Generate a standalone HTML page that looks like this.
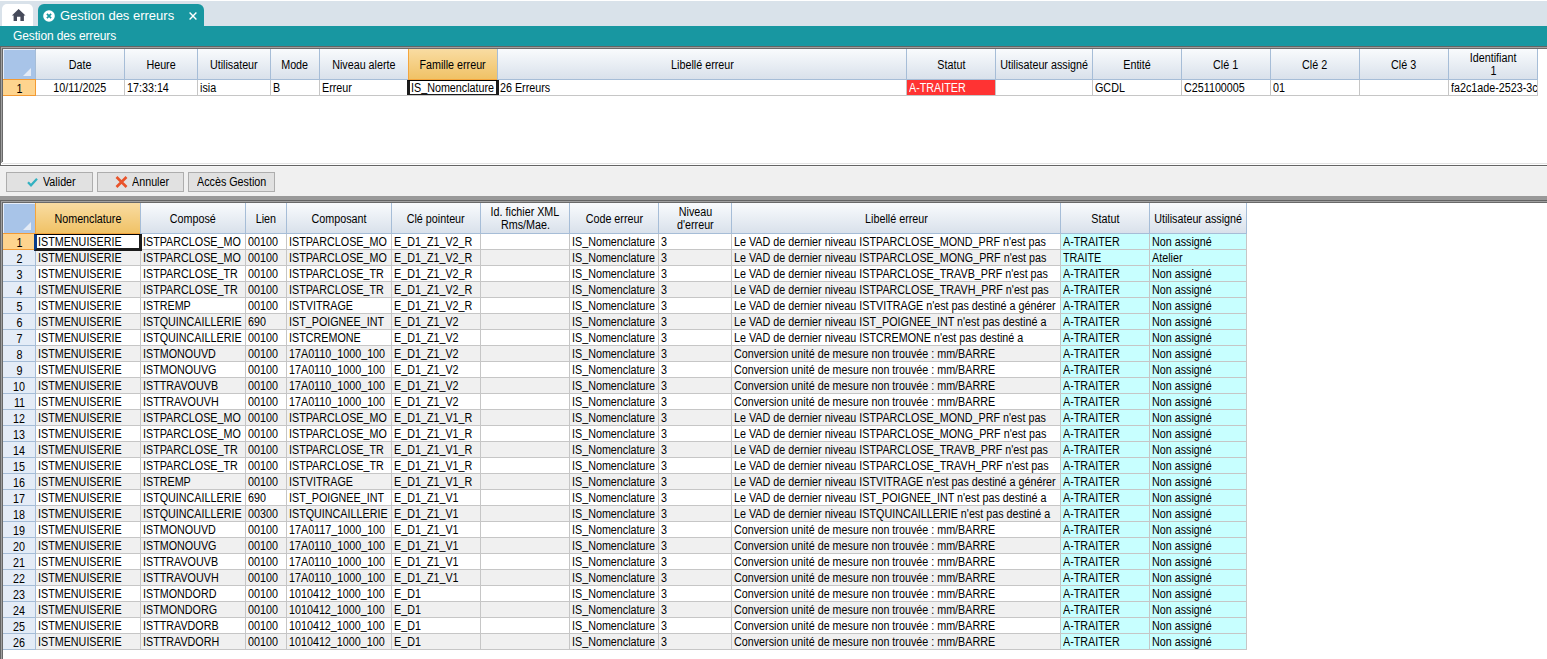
<!DOCTYPE html><html><head><meta charset="utf-8"><style>
html,body{margin:0;padding:0;}
body{width:1547px;height:659px;position:relative;overflow:hidden;background:#f0f0f0;font-family:"Liberation Sans",sans-serif;}
div{position:absolute;box-sizing:border-box;}
.c{overflow:hidden;white-space:nowrap;}
.t{position:absolute;top:0;transform-origin:0 0;white-space:nowrap;}
.cc{display:flex;justify-content:center;}
i{font-style:normal;position:relative;top:-1px;}
.tc{display:block;transform-origin:50% 0;white-space:nowrap;}
</style></head><body>

<div style="left:0px;top:0px;width:1547px;height:26px;background:#d9e2ea;"></div>
<div style="left:0px;top:0px;width:1547px;height:1px;background:#ffffff;"></div>
<div style="left:2px;top:4px;width:31px;height:22px;background:#ffffff;border-radius:5px 5px 0 0;"></div>
<svg style="position:absolute;left:11px;top:8px" width="16" height="14" viewBox="0 0 16 14"><path d="M7.6 1 L0.9 7.4 L2.6 7.4 L2.6 13 L6 13 L6 8.8 L9.4 8.8 L9.4 13 L12.9 13 L12.9 7.4 L14.5 7.4 Z" fill="#464a5a"/></svg>
<div style="left:38px;top:4px;width:166px;height:22px;background:#1897a1;border-radius:6px 6px 0 0;"></div>
<svg style="position:absolute;left:43px;top:10px" width="12" height="12" viewBox="0 0 12 12"><circle cx="6" cy="6" r="5.8" fill="#fff"/><path d="M3.9 3.9 L8.1 8.1 M8.1 3.9 L3.9 8.1" stroke="#1897a1" stroke-width="1.7"/></svg>
<div style="left:60px;top:6px;height:20px;line-height:20px;font-size:13px;color:#fff;white-space:nowrap;">Gestion des erreurs</div>
<svg style="position:absolute;left:189px;top:12px" width="8" height="8" viewBox="0 0 8 8"><path d="M0.6 0.6 L7.4 7.4 M7.4 0.6 L0.6 7.4" stroke="#fff" stroke-width="1.4"/></svg>
<div style="left:0px;top:26px;width:1547px;height:20px;background:#1897a1;"></div>
<div style="left:13px;top:26px;height:20px;line-height:20px;font-size:12px;letter-spacing:-0.12px;color:#fff;white-space:nowrap;">Gestion des erreurs</div>
<div style="left:0px;top:46px;width:1547px;height:120px;background:#ffffff;"></div>
<div style="left:0px;top:46px;width:1547px;height:1px;background:#646464;"></div>
<div style="left:0px;top:46px;width:1px;height:120px;background:#646464;"></div>
<div style="left:1px;top:47px;width:1546px;height:1px;background:#a0a0a0;"></div>
<div style="left:1px;top:47px;width:1px;height:116px;background:#a0a0a0;"></div>
<div style="left:2px;top:48px;width:1545px;height:1px;background:#696969;"></div>
<div style="left:2px;top:48px;width:1px;height:114px;background:#696969;"></div>
<div style="left:2px;top:163px;width:1545px;height:1px;background:#e3e3e3;"></div>
<div style="left:1px;top:164px;width:1546px;height:1px;background:#ffffff;"></div>
<div style="left:0px;top:165px;width:1547px;height:1px;background:#646464;"></div>
<div style="left:0px;top:166px;width:1547px;height:30px;background:#f0f0f0;"></div>
<div style="left:0px;top:166px;width:1547px;height:1px;background:#f6f6f6;"></div>
<div style="left:0px;top:196px;width:1547px;height:4px;background:#999999;"></div>
<div style="left:0px;top:200px;width:1547px;height:459px;background:#ffffff;"></div>
<div style="left:0px;top:200px;width:1547px;height:1px;background:#646464;"></div>
<div style="left:0px;top:200px;width:1px;height:459px;background:#646464;"></div>
<div style="left:1px;top:201px;width:1546px;height:1px;background:#a0a0a0;"></div>
<div style="left:1px;top:201px;width:1px;height:459px;background:#a0a0a0;"></div>
<div style="left:2px;top:202px;width:1545px;height:1px;background:#696969;"></div>
<div style="left:2px;top:202px;width:1px;height:459px;background:#696969;"></div>
<div style="left:3px;top:49px;width:32px;height:30px;background:#a8c4e8;"></div>
<div style="left:3px;top:49px;width:32px;height:1px;background:#e6eefa;"></div>
<div style="left:3px;top:49px;width:1px;height:30px;background:#e6eefa;"></div>
<svg style="position:absolute;left:23px;top:68px" width="9" height="9" viewBox="0 0 9 9"><path d="M8 0 L8 8 L0 8 Z" fill="#e4ebf6"/></svg>
<div style="left:3px;top:79px;width:32px;height:1px;background:#a6bdd7;"></div>
<div style="left:36px;top:49px;width:88px;height:30px;background:linear-gradient(#f9fbfd,#d9e1eb);"></div>
<div class="c cc" style="left:36px;top:57px;width:88px;height:16px;line-height:16px;color:#000;"><span class="tc" style="font-size:12.5px;transform:scaleX(0.86)">Date</span></div>
<div style="left:125px;top:49px;width:72px;height:30px;background:linear-gradient(#f9fbfd,#d9e1eb);"></div>
<div class="c cc" style="left:125px;top:57px;width:72px;height:16px;line-height:16px;color:#000;"><span class="tc" style="font-size:12.5px;transform:scaleX(0.86)">Heure</span></div>
<div style="left:198px;top:49px;width:72px;height:30px;background:linear-gradient(#f9fbfd,#d9e1eb);"></div>
<div class="c cc" style="left:198px;top:57px;width:72px;height:16px;line-height:16px;color:#000;"><span class="tc" style="font-size:12.5px;transform:scaleX(0.86)">Utilisateur</span></div>
<div style="left:271px;top:49px;width:48px;height:30px;background:linear-gradient(#f9fbfd,#d9e1eb);"></div>
<div class="c cc" style="left:271px;top:57px;width:48px;height:16px;line-height:16px;color:#000;"><span class="tc" style="font-size:12.5px;transform:scaleX(0.86)">Mode</span></div>
<div style="left:320px;top:49px;width:88px;height:30px;background:linear-gradient(#f9fbfd,#d9e1eb);"></div>
<div class="c cc" style="left:320px;top:57px;width:88px;height:16px;line-height:16px;color:#000;"><span class="tc" style="font-size:12.5px;transform:scaleX(0.86)">Niveau alerte</span></div>
<div style="left:409px;top:49px;width:88px;height:30px;background:linear-gradient(#f9dca2,#f0c266);"></div>
<div class="c cc" style="left:409px;top:57px;width:88px;height:16px;line-height:16px;color:#000;"><span class="tc" style="font-size:12.5px;transform:scaleX(0.86)">Famille erreur</span></div>
<div style="left:498px;top:49px;width:408px;height:30px;background:linear-gradient(#f9fbfd,#d9e1eb);"></div>
<div class="c cc" style="left:498px;top:57px;width:408px;height:16px;line-height:16px;color:#000;"><span class="tc" style="font-size:12.5px;transform:scaleX(0.86)">Libellé erreur</span></div>
<div style="left:907px;top:49px;width:88px;height:30px;background:linear-gradient(#f9fbfd,#d9e1eb);"></div>
<div class="c cc" style="left:907px;top:57px;width:88px;height:16px;line-height:16px;color:#000;"><span class="tc" style="font-size:12.5px;transform:scaleX(0.86)">Statut</span></div>
<div style="left:996px;top:49px;width:96px;height:30px;background:linear-gradient(#f9fbfd,#d9e1eb);"></div>
<div class="c cc" style="left:996px;top:57px;width:96px;height:16px;line-height:16px;color:#000;"><span class="tc" style="font-size:12.5px;transform:scaleX(0.86)">Utilisateur assigné</span></div>
<div style="left:1093px;top:49px;width:88px;height:30px;background:linear-gradient(#f9fbfd,#d9e1eb);"></div>
<div class="c cc" style="left:1093px;top:57px;width:88px;height:16px;line-height:16px;color:#000;"><span class="tc" style="font-size:12.5px;transform:scaleX(0.86)">Entité</span></div>
<div style="left:1182px;top:49px;width:88px;height:30px;background:linear-gradient(#f9fbfd,#d9e1eb);"></div>
<div class="c cc" style="left:1182px;top:57px;width:88px;height:16px;line-height:16px;color:#000;"><span class="tc" style="font-size:12.5px;transform:scaleX(0.86)">Clé 1</span></div>
<div style="left:1271px;top:49px;width:88px;height:30px;background:linear-gradient(#f9fbfd,#d9e1eb);"></div>
<div class="c cc" style="left:1271px;top:57px;width:88px;height:16px;line-height:16px;color:#000;"><span class="tc" style="font-size:12.5px;transform:scaleX(0.86)">Clé 2</span></div>
<div style="left:1360px;top:49px;width:88px;height:30px;background:linear-gradient(#f9fbfd,#d9e1eb);"></div>
<div class="c cc" style="left:1360px;top:57px;width:88px;height:16px;line-height:16px;color:#000;"><span class="tc" style="font-size:12.5px;transform:scaleX(0.86)">Clé 3</span></div>
<div style="left:1449px;top:49px;width:88px;height:30px;background:linear-gradient(#f9fbfd,#d9e1eb);"></div>
<div class="c cc" style="left:1449px;top:51px;width:88px;height:14px;line-height:14px;color:#000;"><span class="tc" style="font-size:12.5px;transform:scaleX(0.86)">Identifiant</span></div>
<div class="c cc" style="left:1449px;top:64px;width:88px;height:14px;line-height:14px;color:#000;"><span class="tc" style="font-size:12.5px;transform:scaleX(0.86)">1</span></div>
<div style="left:35px;top:49px;width:1px;height:30px;background:#a6bdd7;"></div>
<div style="left:124px;top:49px;width:1px;height:30px;background:#a6bdd7;"></div>
<div style="left:197px;top:49px;width:1px;height:30px;background:#a6bdd7;"></div>
<div style="left:270px;top:49px;width:1px;height:30px;background:#a6bdd7;"></div>
<div style="left:319px;top:49px;width:1px;height:30px;background:#a6bdd7;"></div>
<div style="left:408px;top:49px;width:1px;height:30px;background:#a6bdd7;"></div>
<div style="left:497px;top:49px;width:1px;height:30px;background:#a6bdd7;"></div>
<div style="left:906px;top:49px;width:1px;height:30px;background:#a6bdd7;"></div>
<div style="left:995px;top:49px;width:1px;height:30px;background:#a6bdd7;"></div>
<div style="left:1092px;top:49px;width:1px;height:30px;background:#a6bdd7;"></div>
<div style="left:1181px;top:49px;width:1px;height:30px;background:#a6bdd7;"></div>
<div style="left:1270px;top:49px;width:1px;height:30px;background:#a6bdd7;"></div>
<div style="left:1359px;top:49px;width:1px;height:30px;background:#a6bdd7;"></div>
<div style="left:1448px;top:49px;width:1px;height:30px;background:#a6bdd7;"></div>
<div style="left:1537px;top:49px;width:1px;height:30px;background:#a6bdd7;"></div>
<div style="left:35px;top:79px;width:1503px;height:1px;background:#a6bdd7;"></div>
<div style="left:408px;top:49px;width:1px;height:30px;background:#f4a53c;"></div>
<div style="left:408px;top:79px;width:89px;height:1px;background:#f4a53c;"></div>
<div style="left:3px;top:79px;width:33px;height:17px;background:#fed48e;border:1px solid #f39a33;border-left:0;"></div>
<div class="c cc" style="left:3px;top:81px;width:32px;height:15px;line-height:16px;color:#000;"><span class="tc" style="font-size:12.5px;transform:scaleX(0.86)">1</span></div>
<div style="left:36px;top:80px;width:88px;height:15px;background:#ffffff;"></div>
<div style="left:36px;top:95px;width:89px;height:1px;background:#c6c6c6;"></div>
<div style="left:124px;top:80px;width:1px;height:16px;background:#c6c6c6;"></div>
<div class="c cc" style="left:36px;top:80px;width:88px;height:15px;line-height:16px;color:#000;"><span class="tc" style="font-size:12.5px;transform:scaleX(0.86)">10/11/2025</span></div>
<div style="left:125px;top:80px;width:72px;height:15px;background:#ffffff;"></div>
<div style="left:125px;top:95px;width:73px;height:1px;background:#c6c6c6;"></div>
<div style="left:197px;top:80px;width:1px;height:16px;background:#c6c6c6;"></div>
<div class="c" style="left:125px;top:80px;width:72px;height:15px;line-height:16px;color:#000;"><span class="t" style="left:2px;font-size:12.5px;transform:scaleX(0.86)">17:33:14</span></div>
<div style="left:198px;top:80px;width:72px;height:15px;background:#ffffff;"></div>
<div style="left:198px;top:95px;width:73px;height:1px;background:#c6c6c6;"></div>
<div style="left:270px;top:80px;width:1px;height:16px;background:#c6c6c6;"></div>
<div class="c" style="left:198px;top:80px;width:72px;height:15px;line-height:16px;color:#000;"><span class="t" style="left:2px;font-size:12.5px;transform:scaleX(0.86)">isia</span></div>
<div style="left:271px;top:80px;width:48px;height:15px;background:#ffffff;"></div>
<div style="left:271px;top:95px;width:49px;height:1px;background:#c6c6c6;"></div>
<div style="left:319px;top:80px;width:1px;height:16px;background:#c6c6c6;"></div>
<div class="c" style="left:271px;top:80px;width:48px;height:15px;line-height:16px;color:#000;"><span class="t" style="left:2px;font-size:12.5px;transform:scaleX(0.86)">B</span></div>
<div style="left:320px;top:80px;width:88px;height:15px;background:#ffffff;"></div>
<div style="left:320px;top:95px;width:89px;height:1px;background:#c6c6c6;"></div>
<div style="left:408px;top:80px;width:1px;height:16px;background:#c6c6c6;"></div>
<div class="c" style="left:320px;top:80px;width:88px;height:15px;line-height:16px;color:#000;"><span class="t" style="left:2px;font-size:12.5px;transform:scaleX(0.86)">Erreur</span></div>
<div style="left:409px;top:80px;width:88px;height:15px;background:#ffffff;"></div>
<div style="left:409px;top:95px;width:89px;height:1px;background:#c6c6c6;"></div>
<div style="left:497px;top:80px;width:1px;height:16px;background:#c6c6c6;"></div>
<div class="c" style="left:409px;top:80px;width:88px;height:15px;line-height:16px;color:#000;"><span class="t" style="left:2px;font-size:12.5px;transform:scaleX(0.86)">IS<i>_</i>Nomenclature</span></div>
<div style="left:498px;top:80px;width:408px;height:15px;background:#ffffff;"></div>
<div style="left:498px;top:95px;width:409px;height:1px;background:#c6c6c6;"></div>
<div style="left:906px;top:80px;width:1px;height:16px;background:#c6c6c6;"></div>
<div class="c" style="left:498px;top:80px;width:408px;height:15px;line-height:16px;color:#000;"><span class="t" style="left:2px;font-size:12.5px;transform:scaleX(0.86)">26 Erreurs</span></div>
<div style="left:907px;top:80px;width:88px;height:15px;background:#ff3333;"></div>
<div style="left:907px;top:95px;width:89px;height:1px;background:#c6c6c6;"></div>
<div style="left:995px;top:80px;width:1px;height:16px;background:#c6c6c6;"></div>
<div class="c" style="left:907px;top:80px;width:88px;height:15px;line-height:16px;color:#fff;"><span class="t" style="left:2px;font-size:12.5px;transform:scaleX(0.86)">A-TRAITER</span></div>
<div style="left:996px;top:80px;width:96px;height:15px;background:#ffffff;"></div>
<div style="left:996px;top:95px;width:97px;height:1px;background:#c6c6c6;"></div>
<div style="left:1092px;top:80px;width:1px;height:16px;background:#c6c6c6;"></div>
<div style="left:1093px;top:80px;width:88px;height:15px;background:#ffffff;"></div>
<div style="left:1093px;top:95px;width:89px;height:1px;background:#c6c6c6;"></div>
<div style="left:1181px;top:80px;width:1px;height:16px;background:#c6c6c6;"></div>
<div class="c" style="left:1093px;top:80px;width:88px;height:15px;line-height:16px;color:#000;"><span class="t" style="left:2px;font-size:12.5px;transform:scaleX(0.86)">GCDL</span></div>
<div style="left:1182px;top:80px;width:88px;height:15px;background:#ffffff;"></div>
<div style="left:1182px;top:95px;width:89px;height:1px;background:#c6c6c6;"></div>
<div style="left:1270px;top:80px;width:1px;height:16px;background:#c6c6c6;"></div>
<div class="c" style="left:1182px;top:80px;width:88px;height:15px;line-height:16px;color:#000;"><span class="t" style="left:2px;font-size:12.5px;transform:scaleX(0.86)">C251100005</span></div>
<div style="left:1271px;top:80px;width:88px;height:15px;background:#ffffff;"></div>
<div style="left:1271px;top:95px;width:89px;height:1px;background:#c6c6c6;"></div>
<div style="left:1359px;top:80px;width:1px;height:16px;background:#c6c6c6;"></div>
<div class="c" style="left:1271px;top:80px;width:88px;height:15px;line-height:16px;color:#000;"><span class="t" style="left:2px;font-size:12.5px;transform:scaleX(0.86)">01</span></div>
<div style="left:1360px;top:80px;width:88px;height:15px;background:#ffffff;"></div>
<div style="left:1360px;top:95px;width:89px;height:1px;background:#c6c6c6;"></div>
<div style="left:1448px;top:80px;width:1px;height:16px;background:#c6c6c6;"></div>
<div style="left:1449px;top:80px;width:88px;height:15px;background:#ffffff;"></div>
<div style="left:1449px;top:95px;width:89px;height:1px;background:#c6c6c6;"></div>
<div style="left:1537px;top:80px;width:1px;height:16px;background:#c6c6c6;"></div>
<div class="c" style="left:1449px;top:80px;width:88px;height:15px;line-height:16px;color:#000;"><span class="t" style="left:2px;font-size:12.5px;transform:scaleX(0.86)">fa2c1ade-2523-3c0e</span></div>
<div style="left:407px;top:80px;width:92px;height:15px;border-top:1px solid #000;border-left:3px solid #1c1c1c;border-right:3px solid #1c1c1c;border-bottom:1px solid #1c1c1c;"></div>
<div style="left:6px;top:172px;width:87px;height:20px;background:#e1e1e1;border:1px solid #adadad;"></div>
<svg style="position:absolute;left:27px;top:177px" width="11" height="10" viewBox="0 0 11 10"><path d="M1 5.2 L4 8.3 L10 1.7" fill="none" stroke="#33b1c1" stroke-width="2.2"/></svg>
<div class="c" style="left:43px;top:172px;width:120px;height:20px;line-height:20px;"><span class="t" style="font-size:12.5px;transform:scaleX(0.86)">Valider</span></div>
<div style="left:97px;top:172px;width:87px;height:20px;background:#e1e1e1;border:1px solid #adadad;"></div>
<svg style="position:absolute;left:115px;top:176px" width="13" height="12" viewBox="0 0 13 12"><path d="M1.5 1 L11.5 11 M11.5 1 L1.5 11" fill="none" stroke="#e9532a" stroke-width="2.6"/></svg>
<div class="c" style="left:132px;top:172px;width:120px;height:20px;line-height:20px;"><span class="t" style="font-size:12.5px;transform:scaleX(0.86)">Annuler</span></div>
<div style="left:188px;top:172px;width:87px;height:20px;background:#e1e1e1;border:1px solid #adadad;"></div>
<div class="c" style="left:197px;top:172px;width:120px;height:20px;line-height:20px;"><span class="t" style="font-size:12.5px;transform:scaleX(0.86)">Accès Gestion</span></div>
<div style="left:3px;top:203px;width:32px;height:30px;background:#a8c4e8;"></div>
<div style="left:3px;top:203px;width:32px;height:1px;background:#e6eefa;"></div>
<div style="left:3px;top:203px;width:1px;height:30px;background:#e6eefa;"></div>
<svg style="position:absolute;left:23px;top:222px" width="9" height="9" viewBox="0 0 9 9"><path d="M8 0 L8 8 L0 8 Z" fill="#e4ebf6"/></svg>
<div style="left:3px;top:233px;width:32px;height:1px;background:#a6bdd7;"></div>
<div style="left:36px;top:203px;width:104px;height:30px;background:linear-gradient(#f9dca2,#f0c266);"></div>
<div class="c cc" style="left:36px;top:211px;width:104px;height:16px;line-height:16px;color:#000;"><span class="tc" style="font-size:12.5px;transform:scaleX(0.86)">Nomenclature</span></div>
<div style="left:141px;top:203px;width:104px;height:30px;background:linear-gradient(#f9fbfd,#d9e1eb);"></div>
<div class="c cc" style="left:141px;top:211px;width:104px;height:16px;line-height:16px;color:#000;"><span class="tc" style="font-size:12.5px;transform:scaleX(0.86)">Composé</span></div>
<div style="left:246px;top:203px;width:40px;height:30px;background:linear-gradient(#f9fbfd,#d9e1eb);"></div>
<div class="c cc" style="left:246px;top:211px;width:40px;height:16px;line-height:16px;color:#000;"><span class="tc" style="font-size:12.5px;transform:scaleX(0.86)">Lien</span></div>
<div style="left:287px;top:203px;width:104px;height:30px;background:linear-gradient(#f9fbfd,#d9e1eb);"></div>
<div class="c cc" style="left:287px;top:211px;width:104px;height:16px;line-height:16px;color:#000;"><span class="tc" style="font-size:12.5px;transform:scaleX(0.86)">Composant</span></div>
<div style="left:392px;top:203px;width:88px;height:30px;background:linear-gradient(#f9fbfd,#d9e1eb);"></div>
<div class="c cc" style="left:392px;top:211px;width:88px;height:16px;line-height:16px;color:#000;"><span class="tc" style="font-size:12.5px;transform:scaleX(0.86)">Clé pointeur</span></div>
<div style="left:481px;top:203px;width:88px;height:30px;background:linear-gradient(#f9fbfd,#d9e1eb);"></div>
<div class="c cc" style="left:481px;top:205px;width:88px;height:14px;line-height:14px;color:#000;"><span class="tc" style="font-size:12.5px;transform:scaleX(0.86)">Id. fichier XML</span></div>
<div class="c cc" style="left:481px;top:218px;width:88px;height:14px;line-height:14px;color:#000;"><span class="tc" style="font-size:12.5px;transform:scaleX(0.86)">Rms/Mae.</span></div>
<div style="left:570px;top:203px;width:88px;height:30px;background:linear-gradient(#f9fbfd,#d9e1eb);"></div>
<div class="c cc" style="left:570px;top:211px;width:88px;height:16px;line-height:16px;color:#000;"><span class="tc" style="font-size:12.5px;transform:scaleX(0.86)">Code erreur</span></div>
<div style="left:659px;top:203px;width:72px;height:30px;background:linear-gradient(#f9fbfd,#d9e1eb);"></div>
<div class="c cc" style="left:659px;top:205px;width:72px;height:14px;line-height:14px;color:#000;"><span class="tc" style="font-size:12.5px;transform:scaleX(0.86)">Niveau</span></div>
<div class="c cc" style="left:659px;top:218px;width:72px;height:14px;line-height:14px;color:#000;"><span class="tc" style="font-size:12.5px;transform:scaleX(0.86)">d&#x27;erreur</span></div>
<div style="left:732px;top:203px;width:328px;height:30px;background:linear-gradient(#f9fbfd,#d9e1eb);"></div>
<div class="c cc" style="left:732px;top:211px;width:328px;height:16px;line-height:16px;color:#000;"><span class="tc" style="font-size:12.5px;transform:scaleX(0.86)">Libellé erreur</span></div>
<div style="left:1061px;top:203px;width:88px;height:30px;background:linear-gradient(#f9fbfd,#d9e1eb);"></div>
<div class="c cc" style="left:1061px;top:211px;width:88px;height:16px;line-height:16px;color:#000;"><span class="tc" style="font-size:12.5px;transform:scaleX(0.86)">Statut</span></div>
<div style="left:1150px;top:203px;width:96px;height:30px;background:linear-gradient(#f9fbfd,#d9e1eb);"></div>
<div class="c cc" style="left:1150px;top:211px;width:96px;height:16px;line-height:16px;color:#000;"><span class="tc" style="font-size:12.5px;transform:scaleX(0.86)">Utilisateur assigné</span></div>
<div style="left:35px;top:203px;width:1px;height:30px;background:#a6bdd7;"></div>
<div style="left:140px;top:203px;width:1px;height:30px;background:#a6bdd7;"></div>
<div style="left:245px;top:203px;width:1px;height:30px;background:#a6bdd7;"></div>
<div style="left:286px;top:203px;width:1px;height:30px;background:#a6bdd7;"></div>
<div style="left:391px;top:203px;width:1px;height:30px;background:#a6bdd7;"></div>
<div style="left:480px;top:203px;width:1px;height:30px;background:#a6bdd7;"></div>
<div style="left:569px;top:203px;width:1px;height:30px;background:#a6bdd7;"></div>
<div style="left:658px;top:203px;width:1px;height:30px;background:#a6bdd7;"></div>
<div style="left:731px;top:203px;width:1px;height:30px;background:#a6bdd7;"></div>
<div style="left:1060px;top:203px;width:1px;height:30px;background:#a6bdd7;"></div>
<div style="left:1149px;top:203px;width:1px;height:30px;background:#a6bdd7;"></div>
<div style="left:1246px;top:203px;width:1px;height:30px;background:#a6bdd7;"></div>
<div style="left:35px;top:233px;width:1212px;height:1px;background:#a6bdd7;"></div>
<div style="left:35px;top:203px;width:1px;height:30px;background:#f4a53c;"></div>
<div style="left:35px;top:233px;width:105px;height:1px;background:#f4a53c;"></div>
<div style="left:3px;top:233px;width:33px;height:17px;background:#fed48e;border:1px solid #f39a33;border-left:0;"></div>
<div class="c cc" style="left:3px;top:235px;width:32px;height:15px;line-height:16px;color:#000;"><span class="tc" style="font-size:12.5px;transform:scaleX(0.86)">1</span></div>
<div style="left:36px;top:234px;width:104px;height:15px;background:#ffffff;"></div>
<div style="left:36px;top:249px;width:105px;height:1px;background:#c6c6c6;"></div>
<div style="left:140px;top:234px;width:1px;height:16px;background:#c6c6c6;"></div>
<div class="c" style="left:36px;top:234px;width:104px;height:15px;line-height:16px;color:#000;"><span class="t" style="left:2px;font-size:12.5px;transform:scaleX(0.86)">ISTMENUISERIE</span></div>
<div style="left:141px;top:234px;width:104px;height:15px;background:#ffffff;"></div>
<div style="left:141px;top:249px;width:105px;height:1px;background:#c6c6c6;"></div>
<div style="left:245px;top:234px;width:1px;height:16px;background:#c6c6c6;"></div>
<div class="c" style="left:141px;top:234px;width:104px;height:15px;line-height:16px;color:#000;"><span class="t" style="left:2px;font-size:12.5px;transform:scaleX(0.86)">ISTPARCLOSE<i>_</i>MO</span></div>
<div style="left:246px;top:234px;width:40px;height:15px;background:#ffffff;"></div>
<div style="left:246px;top:249px;width:41px;height:1px;background:#c6c6c6;"></div>
<div style="left:286px;top:234px;width:1px;height:16px;background:#c6c6c6;"></div>
<div class="c" style="left:246px;top:234px;width:40px;height:15px;line-height:16px;color:#000;"><span class="t" style="left:2px;font-size:12.5px;transform:scaleX(0.86)">00100</span></div>
<div style="left:287px;top:234px;width:104px;height:15px;background:#ffffff;"></div>
<div style="left:287px;top:249px;width:105px;height:1px;background:#c6c6c6;"></div>
<div style="left:391px;top:234px;width:1px;height:16px;background:#c6c6c6;"></div>
<div class="c" style="left:287px;top:234px;width:104px;height:15px;line-height:16px;color:#000;"><span class="t" style="left:2px;font-size:12.5px;transform:scaleX(0.86)">ISTPARCLOSE<i>_</i>MO</span></div>
<div style="left:392px;top:234px;width:88px;height:15px;background:#ffffff;"></div>
<div style="left:392px;top:249px;width:89px;height:1px;background:#c6c6c6;"></div>
<div style="left:480px;top:234px;width:1px;height:16px;background:#c6c6c6;"></div>
<div class="c" style="left:392px;top:234px;width:88px;height:15px;line-height:16px;color:#000;"><span class="t" style="left:2px;font-size:12.5px;transform:scaleX(0.86)">E<i>_</i>D1<i>_</i>Z1<i>_</i>V2<i>_</i>R</span></div>
<div style="left:481px;top:234px;width:88px;height:15px;background:#ffffff;"></div>
<div style="left:481px;top:249px;width:89px;height:1px;background:#c6c6c6;"></div>
<div style="left:569px;top:234px;width:1px;height:16px;background:#c6c6c6;"></div>
<div style="left:570px;top:234px;width:88px;height:15px;background:#ffffff;"></div>
<div style="left:570px;top:249px;width:89px;height:1px;background:#c6c6c6;"></div>
<div style="left:658px;top:234px;width:1px;height:16px;background:#c6c6c6;"></div>
<div class="c" style="left:570px;top:234px;width:88px;height:15px;line-height:16px;color:#000;"><span class="t" style="left:2px;font-size:12.5px;transform:scaleX(0.86)">IS<i>_</i>Nomenclature</span></div>
<div style="left:659px;top:234px;width:72px;height:15px;background:#ffffff;"></div>
<div style="left:659px;top:249px;width:73px;height:1px;background:#c6c6c6;"></div>
<div style="left:731px;top:234px;width:1px;height:16px;background:#c6c6c6;"></div>
<div class="c" style="left:659px;top:234px;width:72px;height:15px;line-height:16px;color:#000;"><span class="t" style="left:2px;font-size:12.5px;transform:scaleX(0.86)">3</span></div>
<div style="left:732px;top:234px;width:328px;height:15px;background:#ffffff;"></div>
<div style="left:732px;top:249px;width:329px;height:1px;background:#c6c6c6;"></div>
<div style="left:1060px;top:234px;width:1px;height:16px;background:#c6c6c6;"></div>
<div class="c" style="left:732px;top:234px;width:328px;height:15px;line-height:16px;color:#000;"><span class="t" style="left:2px;font-size:12.5px;transform:scaleX(0.86)">Le VAD de dernier niveau ISTPARCLOSE<i>_</i>MOND<i>_</i>PRF n&#x27;est pas</span></div>
<div style="left:1061px;top:234px;width:88px;height:15px;background:#c8ffff;"></div>
<div style="left:1061px;top:249px;width:89px;height:1px;background:#c6c6c6;"></div>
<div style="left:1149px;top:234px;width:1px;height:16px;background:#c6c6c6;"></div>
<div class="c" style="left:1061px;top:234px;width:88px;height:15px;line-height:16px;color:#000;"><span class="t" style="left:2px;font-size:12.5px;transform:scaleX(0.86)">A-TRAITER</span></div>
<div style="left:1150px;top:234px;width:96px;height:15px;background:#c8ffff;"></div>
<div style="left:1150px;top:249px;width:97px;height:1px;background:#c6c6c6;"></div>
<div style="left:1246px;top:234px;width:1px;height:16px;background:#c6c6c6;"></div>
<div class="c" style="left:1150px;top:234px;width:96px;height:15px;line-height:16px;color:#000;"><span class="t" style="left:2px;font-size:12.5px;transform:scaleX(0.86)">Non assigné</span></div>
<div style="left:3px;top:250px;width:32px;height:15px;background:#e4ecf7;"></div>
<div style="left:3px;top:265px;width:32px;height:1px;background:#a6bdd7;"></div>
<div style="left:35px;top:250px;width:1px;height:16px;background:#a6bdd7;"></div>
<div class="c cc" style="left:3px;top:251px;width:32px;height:15px;line-height:16px;color:#000;"><span class="tc" style="font-size:12.5px;transform:scaleX(0.86)">2</span></div>
<div style="left:36px;top:250px;width:104px;height:15px;background:#f0f0f0;"></div>
<div style="left:36px;top:265px;width:105px;height:1px;background:#c6c6c6;"></div>
<div style="left:140px;top:250px;width:1px;height:16px;background:#c6c6c6;"></div>
<div class="c" style="left:36px;top:250px;width:104px;height:15px;line-height:16px;color:#000;"><span class="t" style="left:2px;font-size:12.5px;transform:scaleX(0.86)">ISTMENUISERIE</span></div>
<div style="left:141px;top:250px;width:104px;height:15px;background:#f0f0f0;"></div>
<div style="left:141px;top:265px;width:105px;height:1px;background:#c6c6c6;"></div>
<div style="left:245px;top:250px;width:1px;height:16px;background:#c6c6c6;"></div>
<div class="c" style="left:141px;top:250px;width:104px;height:15px;line-height:16px;color:#000;"><span class="t" style="left:2px;font-size:12.5px;transform:scaleX(0.86)">ISTPARCLOSE<i>_</i>MO</span></div>
<div style="left:246px;top:250px;width:40px;height:15px;background:#f0f0f0;"></div>
<div style="left:246px;top:265px;width:41px;height:1px;background:#c6c6c6;"></div>
<div style="left:286px;top:250px;width:1px;height:16px;background:#c6c6c6;"></div>
<div class="c" style="left:246px;top:250px;width:40px;height:15px;line-height:16px;color:#000;"><span class="t" style="left:2px;font-size:12.5px;transform:scaleX(0.86)">00100</span></div>
<div style="left:287px;top:250px;width:104px;height:15px;background:#f0f0f0;"></div>
<div style="left:287px;top:265px;width:105px;height:1px;background:#c6c6c6;"></div>
<div style="left:391px;top:250px;width:1px;height:16px;background:#c6c6c6;"></div>
<div class="c" style="left:287px;top:250px;width:104px;height:15px;line-height:16px;color:#000;"><span class="t" style="left:2px;font-size:12.5px;transform:scaleX(0.86)">ISTPARCLOSE<i>_</i>MO</span></div>
<div style="left:392px;top:250px;width:88px;height:15px;background:#f0f0f0;"></div>
<div style="left:392px;top:265px;width:89px;height:1px;background:#c6c6c6;"></div>
<div style="left:480px;top:250px;width:1px;height:16px;background:#c6c6c6;"></div>
<div class="c" style="left:392px;top:250px;width:88px;height:15px;line-height:16px;color:#000;"><span class="t" style="left:2px;font-size:12.5px;transform:scaleX(0.86)">E<i>_</i>D1<i>_</i>Z1<i>_</i>V2<i>_</i>R</span></div>
<div style="left:481px;top:250px;width:88px;height:15px;background:#f0f0f0;"></div>
<div style="left:481px;top:265px;width:89px;height:1px;background:#c6c6c6;"></div>
<div style="left:569px;top:250px;width:1px;height:16px;background:#c6c6c6;"></div>
<div style="left:570px;top:250px;width:88px;height:15px;background:#f0f0f0;"></div>
<div style="left:570px;top:265px;width:89px;height:1px;background:#c6c6c6;"></div>
<div style="left:658px;top:250px;width:1px;height:16px;background:#c6c6c6;"></div>
<div class="c" style="left:570px;top:250px;width:88px;height:15px;line-height:16px;color:#000;"><span class="t" style="left:2px;font-size:12.5px;transform:scaleX(0.86)">IS<i>_</i>Nomenclature</span></div>
<div style="left:659px;top:250px;width:72px;height:15px;background:#f0f0f0;"></div>
<div style="left:659px;top:265px;width:73px;height:1px;background:#c6c6c6;"></div>
<div style="left:731px;top:250px;width:1px;height:16px;background:#c6c6c6;"></div>
<div class="c" style="left:659px;top:250px;width:72px;height:15px;line-height:16px;color:#000;"><span class="t" style="left:2px;font-size:12.5px;transform:scaleX(0.86)">3</span></div>
<div style="left:732px;top:250px;width:328px;height:15px;background:#f0f0f0;"></div>
<div style="left:732px;top:265px;width:329px;height:1px;background:#c6c6c6;"></div>
<div style="left:1060px;top:250px;width:1px;height:16px;background:#c6c6c6;"></div>
<div class="c" style="left:732px;top:250px;width:328px;height:15px;line-height:16px;color:#000;"><span class="t" style="left:2px;font-size:12.5px;transform:scaleX(0.86)">Le VAD de dernier niveau ISTPARCLOSE<i>_</i>MONG<i>_</i>PRF n&#x27;est pas</span></div>
<div style="left:1061px;top:250px;width:88px;height:15px;background:#c8ffff;"></div>
<div style="left:1061px;top:265px;width:89px;height:1px;background:#c6c6c6;"></div>
<div style="left:1149px;top:250px;width:1px;height:16px;background:#c6c6c6;"></div>
<div class="c" style="left:1061px;top:250px;width:88px;height:15px;line-height:16px;color:#000;"><span class="t" style="left:2px;font-size:12.5px;transform:scaleX(0.86)">TRAITE</span></div>
<div style="left:1150px;top:250px;width:96px;height:15px;background:#c8ffff;"></div>
<div style="left:1150px;top:265px;width:97px;height:1px;background:#c6c6c6;"></div>
<div style="left:1246px;top:250px;width:1px;height:16px;background:#c6c6c6;"></div>
<div class="c" style="left:1150px;top:250px;width:96px;height:15px;line-height:16px;color:#000;"><span class="t" style="left:2px;font-size:12.5px;transform:scaleX(0.86)">Atelier</span></div>
<div style="left:3px;top:266px;width:32px;height:15px;background:#e4ecf7;"></div>
<div style="left:3px;top:281px;width:32px;height:1px;background:#a6bdd7;"></div>
<div style="left:35px;top:266px;width:1px;height:16px;background:#a6bdd7;"></div>
<div class="c cc" style="left:3px;top:267px;width:32px;height:15px;line-height:16px;color:#000;"><span class="tc" style="font-size:12.5px;transform:scaleX(0.86)">3</span></div>
<div style="left:36px;top:266px;width:104px;height:15px;background:#ffffff;"></div>
<div style="left:36px;top:281px;width:105px;height:1px;background:#c6c6c6;"></div>
<div style="left:140px;top:266px;width:1px;height:16px;background:#c6c6c6;"></div>
<div class="c" style="left:36px;top:266px;width:104px;height:15px;line-height:16px;color:#000;"><span class="t" style="left:2px;font-size:12.5px;transform:scaleX(0.86)">ISTMENUISERIE</span></div>
<div style="left:141px;top:266px;width:104px;height:15px;background:#ffffff;"></div>
<div style="left:141px;top:281px;width:105px;height:1px;background:#c6c6c6;"></div>
<div style="left:245px;top:266px;width:1px;height:16px;background:#c6c6c6;"></div>
<div class="c" style="left:141px;top:266px;width:104px;height:15px;line-height:16px;color:#000;"><span class="t" style="left:2px;font-size:12.5px;transform:scaleX(0.86)">ISTPARCLOSE<i>_</i>TR</span></div>
<div style="left:246px;top:266px;width:40px;height:15px;background:#ffffff;"></div>
<div style="left:246px;top:281px;width:41px;height:1px;background:#c6c6c6;"></div>
<div style="left:286px;top:266px;width:1px;height:16px;background:#c6c6c6;"></div>
<div class="c" style="left:246px;top:266px;width:40px;height:15px;line-height:16px;color:#000;"><span class="t" style="left:2px;font-size:12.5px;transform:scaleX(0.86)">00100</span></div>
<div style="left:287px;top:266px;width:104px;height:15px;background:#ffffff;"></div>
<div style="left:287px;top:281px;width:105px;height:1px;background:#c6c6c6;"></div>
<div style="left:391px;top:266px;width:1px;height:16px;background:#c6c6c6;"></div>
<div class="c" style="left:287px;top:266px;width:104px;height:15px;line-height:16px;color:#000;"><span class="t" style="left:2px;font-size:12.5px;transform:scaleX(0.86)">ISTPARCLOSE<i>_</i>TR</span></div>
<div style="left:392px;top:266px;width:88px;height:15px;background:#ffffff;"></div>
<div style="left:392px;top:281px;width:89px;height:1px;background:#c6c6c6;"></div>
<div style="left:480px;top:266px;width:1px;height:16px;background:#c6c6c6;"></div>
<div class="c" style="left:392px;top:266px;width:88px;height:15px;line-height:16px;color:#000;"><span class="t" style="left:2px;font-size:12.5px;transform:scaleX(0.86)">E<i>_</i>D1<i>_</i>Z1<i>_</i>V2<i>_</i>R</span></div>
<div style="left:481px;top:266px;width:88px;height:15px;background:#ffffff;"></div>
<div style="left:481px;top:281px;width:89px;height:1px;background:#c6c6c6;"></div>
<div style="left:569px;top:266px;width:1px;height:16px;background:#c6c6c6;"></div>
<div style="left:570px;top:266px;width:88px;height:15px;background:#ffffff;"></div>
<div style="left:570px;top:281px;width:89px;height:1px;background:#c6c6c6;"></div>
<div style="left:658px;top:266px;width:1px;height:16px;background:#c6c6c6;"></div>
<div class="c" style="left:570px;top:266px;width:88px;height:15px;line-height:16px;color:#000;"><span class="t" style="left:2px;font-size:12.5px;transform:scaleX(0.86)">IS<i>_</i>Nomenclature</span></div>
<div style="left:659px;top:266px;width:72px;height:15px;background:#ffffff;"></div>
<div style="left:659px;top:281px;width:73px;height:1px;background:#c6c6c6;"></div>
<div style="left:731px;top:266px;width:1px;height:16px;background:#c6c6c6;"></div>
<div class="c" style="left:659px;top:266px;width:72px;height:15px;line-height:16px;color:#000;"><span class="t" style="left:2px;font-size:12.5px;transform:scaleX(0.86)">3</span></div>
<div style="left:732px;top:266px;width:328px;height:15px;background:#ffffff;"></div>
<div style="left:732px;top:281px;width:329px;height:1px;background:#c6c6c6;"></div>
<div style="left:1060px;top:266px;width:1px;height:16px;background:#c6c6c6;"></div>
<div class="c" style="left:732px;top:266px;width:328px;height:15px;line-height:16px;color:#000;"><span class="t" style="left:2px;font-size:12.5px;transform:scaleX(0.86)">Le VAD de dernier niveau ISTPARCLOSE<i>_</i>TRAVB<i>_</i>PRF n&#x27;est pas</span></div>
<div style="left:1061px;top:266px;width:88px;height:15px;background:#c8ffff;"></div>
<div style="left:1061px;top:281px;width:89px;height:1px;background:#c6c6c6;"></div>
<div style="left:1149px;top:266px;width:1px;height:16px;background:#c6c6c6;"></div>
<div class="c" style="left:1061px;top:266px;width:88px;height:15px;line-height:16px;color:#000;"><span class="t" style="left:2px;font-size:12.5px;transform:scaleX(0.86)">A-TRAITER</span></div>
<div style="left:1150px;top:266px;width:96px;height:15px;background:#c8ffff;"></div>
<div style="left:1150px;top:281px;width:97px;height:1px;background:#c6c6c6;"></div>
<div style="left:1246px;top:266px;width:1px;height:16px;background:#c6c6c6;"></div>
<div class="c" style="left:1150px;top:266px;width:96px;height:15px;line-height:16px;color:#000;"><span class="t" style="left:2px;font-size:12.5px;transform:scaleX(0.86)">Non assigné</span></div>
<div style="left:3px;top:282px;width:32px;height:15px;background:#e4ecf7;"></div>
<div style="left:3px;top:297px;width:32px;height:1px;background:#a6bdd7;"></div>
<div style="left:35px;top:282px;width:1px;height:16px;background:#a6bdd7;"></div>
<div class="c cc" style="left:3px;top:283px;width:32px;height:15px;line-height:16px;color:#000;"><span class="tc" style="font-size:12.5px;transform:scaleX(0.86)">4</span></div>
<div style="left:36px;top:282px;width:104px;height:15px;background:#f0f0f0;"></div>
<div style="left:36px;top:297px;width:105px;height:1px;background:#c6c6c6;"></div>
<div style="left:140px;top:282px;width:1px;height:16px;background:#c6c6c6;"></div>
<div class="c" style="left:36px;top:282px;width:104px;height:15px;line-height:16px;color:#000;"><span class="t" style="left:2px;font-size:12.5px;transform:scaleX(0.86)">ISTMENUISERIE</span></div>
<div style="left:141px;top:282px;width:104px;height:15px;background:#f0f0f0;"></div>
<div style="left:141px;top:297px;width:105px;height:1px;background:#c6c6c6;"></div>
<div style="left:245px;top:282px;width:1px;height:16px;background:#c6c6c6;"></div>
<div class="c" style="left:141px;top:282px;width:104px;height:15px;line-height:16px;color:#000;"><span class="t" style="left:2px;font-size:12.5px;transform:scaleX(0.86)">ISTPARCLOSE<i>_</i>TR</span></div>
<div style="left:246px;top:282px;width:40px;height:15px;background:#f0f0f0;"></div>
<div style="left:246px;top:297px;width:41px;height:1px;background:#c6c6c6;"></div>
<div style="left:286px;top:282px;width:1px;height:16px;background:#c6c6c6;"></div>
<div class="c" style="left:246px;top:282px;width:40px;height:15px;line-height:16px;color:#000;"><span class="t" style="left:2px;font-size:12.5px;transform:scaleX(0.86)">00100</span></div>
<div style="left:287px;top:282px;width:104px;height:15px;background:#f0f0f0;"></div>
<div style="left:287px;top:297px;width:105px;height:1px;background:#c6c6c6;"></div>
<div style="left:391px;top:282px;width:1px;height:16px;background:#c6c6c6;"></div>
<div class="c" style="left:287px;top:282px;width:104px;height:15px;line-height:16px;color:#000;"><span class="t" style="left:2px;font-size:12.5px;transform:scaleX(0.86)">ISTPARCLOSE<i>_</i>TR</span></div>
<div style="left:392px;top:282px;width:88px;height:15px;background:#f0f0f0;"></div>
<div style="left:392px;top:297px;width:89px;height:1px;background:#c6c6c6;"></div>
<div style="left:480px;top:282px;width:1px;height:16px;background:#c6c6c6;"></div>
<div class="c" style="left:392px;top:282px;width:88px;height:15px;line-height:16px;color:#000;"><span class="t" style="left:2px;font-size:12.5px;transform:scaleX(0.86)">E<i>_</i>D1<i>_</i>Z1<i>_</i>V2<i>_</i>R</span></div>
<div style="left:481px;top:282px;width:88px;height:15px;background:#f0f0f0;"></div>
<div style="left:481px;top:297px;width:89px;height:1px;background:#c6c6c6;"></div>
<div style="left:569px;top:282px;width:1px;height:16px;background:#c6c6c6;"></div>
<div style="left:570px;top:282px;width:88px;height:15px;background:#f0f0f0;"></div>
<div style="left:570px;top:297px;width:89px;height:1px;background:#c6c6c6;"></div>
<div style="left:658px;top:282px;width:1px;height:16px;background:#c6c6c6;"></div>
<div class="c" style="left:570px;top:282px;width:88px;height:15px;line-height:16px;color:#000;"><span class="t" style="left:2px;font-size:12.5px;transform:scaleX(0.86)">IS<i>_</i>Nomenclature</span></div>
<div style="left:659px;top:282px;width:72px;height:15px;background:#f0f0f0;"></div>
<div style="left:659px;top:297px;width:73px;height:1px;background:#c6c6c6;"></div>
<div style="left:731px;top:282px;width:1px;height:16px;background:#c6c6c6;"></div>
<div class="c" style="left:659px;top:282px;width:72px;height:15px;line-height:16px;color:#000;"><span class="t" style="left:2px;font-size:12.5px;transform:scaleX(0.86)">3</span></div>
<div style="left:732px;top:282px;width:328px;height:15px;background:#f0f0f0;"></div>
<div style="left:732px;top:297px;width:329px;height:1px;background:#c6c6c6;"></div>
<div style="left:1060px;top:282px;width:1px;height:16px;background:#c6c6c6;"></div>
<div class="c" style="left:732px;top:282px;width:328px;height:15px;line-height:16px;color:#000;"><span class="t" style="left:2px;font-size:12.5px;transform:scaleX(0.86)">Le VAD de dernier niveau ISTPARCLOSE<i>_</i>TRAVH<i>_</i>PRF n&#x27;est pas</span></div>
<div style="left:1061px;top:282px;width:88px;height:15px;background:#c8ffff;"></div>
<div style="left:1061px;top:297px;width:89px;height:1px;background:#c6c6c6;"></div>
<div style="left:1149px;top:282px;width:1px;height:16px;background:#c6c6c6;"></div>
<div class="c" style="left:1061px;top:282px;width:88px;height:15px;line-height:16px;color:#000;"><span class="t" style="left:2px;font-size:12.5px;transform:scaleX(0.86)">A-TRAITER</span></div>
<div style="left:1150px;top:282px;width:96px;height:15px;background:#c8ffff;"></div>
<div style="left:1150px;top:297px;width:97px;height:1px;background:#c6c6c6;"></div>
<div style="left:1246px;top:282px;width:1px;height:16px;background:#c6c6c6;"></div>
<div class="c" style="left:1150px;top:282px;width:96px;height:15px;line-height:16px;color:#000;"><span class="t" style="left:2px;font-size:12.5px;transform:scaleX(0.86)">Non assigné</span></div>
<div style="left:3px;top:298px;width:32px;height:15px;background:#e4ecf7;"></div>
<div style="left:3px;top:313px;width:32px;height:1px;background:#a6bdd7;"></div>
<div style="left:35px;top:298px;width:1px;height:16px;background:#a6bdd7;"></div>
<div class="c cc" style="left:3px;top:299px;width:32px;height:15px;line-height:16px;color:#000;"><span class="tc" style="font-size:12.5px;transform:scaleX(0.86)">5</span></div>
<div style="left:36px;top:298px;width:104px;height:15px;background:#ffffff;"></div>
<div style="left:36px;top:313px;width:105px;height:1px;background:#c6c6c6;"></div>
<div style="left:140px;top:298px;width:1px;height:16px;background:#c6c6c6;"></div>
<div class="c" style="left:36px;top:298px;width:104px;height:15px;line-height:16px;color:#000;"><span class="t" style="left:2px;font-size:12.5px;transform:scaleX(0.86)">ISTMENUISERIE</span></div>
<div style="left:141px;top:298px;width:104px;height:15px;background:#ffffff;"></div>
<div style="left:141px;top:313px;width:105px;height:1px;background:#c6c6c6;"></div>
<div style="left:245px;top:298px;width:1px;height:16px;background:#c6c6c6;"></div>
<div class="c" style="left:141px;top:298px;width:104px;height:15px;line-height:16px;color:#000;"><span class="t" style="left:2px;font-size:12.5px;transform:scaleX(0.86)">ISTREMP</span></div>
<div style="left:246px;top:298px;width:40px;height:15px;background:#ffffff;"></div>
<div style="left:246px;top:313px;width:41px;height:1px;background:#c6c6c6;"></div>
<div style="left:286px;top:298px;width:1px;height:16px;background:#c6c6c6;"></div>
<div class="c" style="left:246px;top:298px;width:40px;height:15px;line-height:16px;color:#000;"><span class="t" style="left:2px;font-size:12.5px;transform:scaleX(0.86)">00100</span></div>
<div style="left:287px;top:298px;width:104px;height:15px;background:#ffffff;"></div>
<div style="left:287px;top:313px;width:105px;height:1px;background:#c6c6c6;"></div>
<div style="left:391px;top:298px;width:1px;height:16px;background:#c6c6c6;"></div>
<div class="c" style="left:287px;top:298px;width:104px;height:15px;line-height:16px;color:#000;"><span class="t" style="left:2px;font-size:12.5px;transform:scaleX(0.86)">ISTVITRAGE</span></div>
<div style="left:392px;top:298px;width:88px;height:15px;background:#ffffff;"></div>
<div style="left:392px;top:313px;width:89px;height:1px;background:#c6c6c6;"></div>
<div style="left:480px;top:298px;width:1px;height:16px;background:#c6c6c6;"></div>
<div class="c" style="left:392px;top:298px;width:88px;height:15px;line-height:16px;color:#000;"><span class="t" style="left:2px;font-size:12.5px;transform:scaleX(0.86)">E<i>_</i>D1<i>_</i>Z1<i>_</i>V2<i>_</i>R</span></div>
<div style="left:481px;top:298px;width:88px;height:15px;background:#ffffff;"></div>
<div style="left:481px;top:313px;width:89px;height:1px;background:#c6c6c6;"></div>
<div style="left:569px;top:298px;width:1px;height:16px;background:#c6c6c6;"></div>
<div style="left:570px;top:298px;width:88px;height:15px;background:#ffffff;"></div>
<div style="left:570px;top:313px;width:89px;height:1px;background:#c6c6c6;"></div>
<div style="left:658px;top:298px;width:1px;height:16px;background:#c6c6c6;"></div>
<div class="c" style="left:570px;top:298px;width:88px;height:15px;line-height:16px;color:#000;"><span class="t" style="left:2px;font-size:12.5px;transform:scaleX(0.86)">IS<i>_</i>Nomenclature</span></div>
<div style="left:659px;top:298px;width:72px;height:15px;background:#ffffff;"></div>
<div style="left:659px;top:313px;width:73px;height:1px;background:#c6c6c6;"></div>
<div style="left:731px;top:298px;width:1px;height:16px;background:#c6c6c6;"></div>
<div class="c" style="left:659px;top:298px;width:72px;height:15px;line-height:16px;color:#000;"><span class="t" style="left:2px;font-size:12.5px;transform:scaleX(0.86)">3</span></div>
<div style="left:732px;top:298px;width:328px;height:15px;background:#ffffff;"></div>
<div style="left:732px;top:313px;width:329px;height:1px;background:#c6c6c6;"></div>
<div style="left:1060px;top:298px;width:1px;height:16px;background:#c6c6c6;"></div>
<div class="c" style="left:732px;top:298px;width:328px;height:15px;line-height:16px;color:#000;"><span class="t" style="left:2px;font-size:12.5px;transform:scaleX(0.86)">Le VAD de dernier niveau ISTVITRAGE n&#x27;est pas destiné a générer</span></div>
<div style="left:1061px;top:298px;width:88px;height:15px;background:#c8ffff;"></div>
<div style="left:1061px;top:313px;width:89px;height:1px;background:#c6c6c6;"></div>
<div style="left:1149px;top:298px;width:1px;height:16px;background:#c6c6c6;"></div>
<div class="c" style="left:1061px;top:298px;width:88px;height:15px;line-height:16px;color:#000;"><span class="t" style="left:2px;font-size:12.5px;transform:scaleX(0.86)">A-TRAITER</span></div>
<div style="left:1150px;top:298px;width:96px;height:15px;background:#c8ffff;"></div>
<div style="left:1150px;top:313px;width:97px;height:1px;background:#c6c6c6;"></div>
<div style="left:1246px;top:298px;width:1px;height:16px;background:#c6c6c6;"></div>
<div class="c" style="left:1150px;top:298px;width:96px;height:15px;line-height:16px;color:#000;"><span class="t" style="left:2px;font-size:12.5px;transform:scaleX(0.86)">Non assigné</span></div>
<div style="left:3px;top:314px;width:32px;height:15px;background:#e4ecf7;"></div>
<div style="left:3px;top:329px;width:32px;height:1px;background:#a6bdd7;"></div>
<div style="left:35px;top:314px;width:1px;height:16px;background:#a6bdd7;"></div>
<div class="c cc" style="left:3px;top:315px;width:32px;height:15px;line-height:16px;color:#000;"><span class="tc" style="font-size:12.5px;transform:scaleX(0.86)">6</span></div>
<div style="left:36px;top:314px;width:104px;height:15px;background:#f0f0f0;"></div>
<div style="left:36px;top:329px;width:105px;height:1px;background:#c6c6c6;"></div>
<div style="left:140px;top:314px;width:1px;height:16px;background:#c6c6c6;"></div>
<div class="c" style="left:36px;top:314px;width:104px;height:15px;line-height:16px;color:#000;"><span class="t" style="left:2px;font-size:12.5px;transform:scaleX(0.86)">ISTMENUISERIE</span></div>
<div style="left:141px;top:314px;width:104px;height:15px;background:#f0f0f0;"></div>
<div style="left:141px;top:329px;width:105px;height:1px;background:#c6c6c6;"></div>
<div style="left:245px;top:314px;width:1px;height:16px;background:#c6c6c6;"></div>
<div class="c" style="left:141px;top:314px;width:104px;height:15px;line-height:16px;color:#000;"><span class="t" style="left:2px;font-size:12.5px;transform:scaleX(0.86)">ISTQUINCAILLERIE</span></div>
<div style="left:246px;top:314px;width:40px;height:15px;background:#f0f0f0;"></div>
<div style="left:246px;top:329px;width:41px;height:1px;background:#c6c6c6;"></div>
<div style="left:286px;top:314px;width:1px;height:16px;background:#c6c6c6;"></div>
<div class="c" style="left:246px;top:314px;width:40px;height:15px;line-height:16px;color:#000;"><span class="t" style="left:2px;font-size:12.5px;transform:scaleX(0.86)">690</span></div>
<div style="left:287px;top:314px;width:104px;height:15px;background:#f0f0f0;"></div>
<div style="left:287px;top:329px;width:105px;height:1px;background:#c6c6c6;"></div>
<div style="left:391px;top:314px;width:1px;height:16px;background:#c6c6c6;"></div>
<div class="c" style="left:287px;top:314px;width:104px;height:15px;line-height:16px;color:#000;"><span class="t" style="left:2px;font-size:12.5px;transform:scaleX(0.86)">IST<i>_</i>POIGNEE<i>_</i>INT</span></div>
<div style="left:392px;top:314px;width:88px;height:15px;background:#f0f0f0;"></div>
<div style="left:392px;top:329px;width:89px;height:1px;background:#c6c6c6;"></div>
<div style="left:480px;top:314px;width:1px;height:16px;background:#c6c6c6;"></div>
<div class="c" style="left:392px;top:314px;width:88px;height:15px;line-height:16px;color:#000;"><span class="t" style="left:2px;font-size:12.5px;transform:scaleX(0.86)">E<i>_</i>D1<i>_</i>Z1<i>_</i>V2</span></div>
<div style="left:481px;top:314px;width:88px;height:15px;background:#f0f0f0;"></div>
<div style="left:481px;top:329px;width:89px;height:1px;background:#c6c6c6;"></div>
<div style="left:569px;top:314px;width:1px;height:16px;background:#c6c6c6;"></div>
<div style="left:570px;top:314px;width:88px;height:15px;background:#f0f0f0;"></div>
<div style="left:570px;top:329px;width:89px;height:1px;background:#c6c6c6;"></div>
<div style="left:658px;top:314px;width:1px;height:16px;background:#c6c6c6;"></div>
<div class="c" style="left:570px;top:314px;width:88px;height:15px;line-height:16px;color:#000;"><span class="t" style="left:2px;font-size:12.5px;transform:scaleX(0.86)">IS<i>_</i>Nomenclature</span></div>
<div style="left:659px;top:314px;width:72px;height:15px;background:#f0f0f0;"></div>
<div style="left:659px;top:329px;width:73px;height:1px;background:#c6c6c6;"></div>
<div style="left:731px;top:314px;width:1px;height:16px;background:#c6c6c6;"></div>
<div class="c" style="left:659px;top:314px;width:72px;height:15px;line-height:16px;color:#000;"><span class="t" style="left:2px;font-size:12.5px;transform:scaleX(0.86)">3</span></div>
<div style="left:732px;top:314px;width:328px;height:15px;background:#f0f0f0;"></div>
<div style="left:732px;top:329px;width:329px;height:1px;background:#c6c6c6;"></div>
<div style="left:1060px;top:314px;width:1px;height:16px;background:#c6c6c6;"></div>
<div class="c" style="left:732px;top:314px;width:328px;height:15px;line-height:16px;color:#000;"><span class="t" style="left:2px;font-size:12.5px;transform:scaleX(0.86)">Le VAD de dernier niveau IST<i>_</i>POIGNEE<i>_</i>INT n&#x27;est pas destiné a</span></div>
<div style="left:1061px;top:314px;width:88px;height:15px;background:#c8ffff;"></div>
<div style="left:1061px;top:329px;width:89px;height:1px;background:#c6c6c6;"></div>
<div style="left:1149px;top:314px;width:1px;height:16px;background:#c6c6c6;"></div>
<div class="c" style="left:1061px;top:314px;width:88px;height:15px;line-height:16px;color:#000;"><span class="t" style="left:2px;font-size:12.5px;transform:scaleX(0.86)">A-TRAITER</span></div>
<div style="left:1150px;top:314px;width:96px;height:15px;background:#c8ffff;"></div>
<div style="left:1150px;top:329px;width:97px;height:1px;background:#c6c6c6;"></div>
<div style="left:1246px;top:314px;width:1px;height:16px;background:#c6c6c6;"></div>
<div class="c" style="left:1150px;top:314px;width:96px;height:15px;line-height:16px;color:#000;"><span class="t" style="left:2px;font-size:12.5px;transform:scaleX(0.86)">Non assigné</span></div>
<div style="left:3px;top:330px;width:32px;height:15px;background:#e4ecf7;"></div>
<div style="left:3px;top:345px;width:32px;height:1px;background:#a6bdd7;"></div>
<div style="left:35px;top:330px;width:1px;height:16px;background:#a6bdd7;"></div>
<div class="c cc" style="left:3px;top:331px;width:32px;height:15px;line-height:16px;color:#000;"><span class="tc" style="font-size:12.5px;transform:scaleX(0.86)">7</span></div>
<div style="left:36px;top:330px;width:104px;height:15px;background:#ffffff;"></div>
<div style="left:36px;top:345px;width:105px;height:1px;background:#c6c6c6;"></div>
<div style="left:140px;top:330px;width:1px;height:16px;background:#c6c6c6;"></div>
<div class="c" style="left:36px;top:330px;width:104px;height:15px;line-height:16px;color:#000;"><span class="t" style="left:2px;font-size:12.5px;transform:scaleX(0.86)">ISTMENUISERIE</span></div>
<div style="left:141px;top:330px;width:104px;height:15px;background:#ffffff;"></div>
<div style="left:141px;top:345px;width:105px;height:1px;background:#c6c6c6;"></div>
<div style="left:245px;top:330px;width:1px;height:16px;background:#c6c6c6;"></div>
<div class="c" style="left:141px;top:330px;width:104px;height:15px;line-height:16px;color:#000;"><span class="t" style="left:2px;font-size:12.5px;transform:scaleX(0.86)">ISTQUINCAILLERIE</span></div>
<div style="left:246px;top:330px;width:40px;height:15px;background:#ffffff;"></div>
<div style="left:246px;top:345px;width:41px;height:1px;background:#c6c6c6;"></div>
<div style="left:286px;top:330px;width:1px;height:16px;background:#c6c6c6;"></div>
<div class="c" style="left:246px;top:330px;width:40px;height:15px;line-height:16px;color:#000;"><span class="t" style="left:2px;font-size:12.5px;transform:scaleX(0.86)">00100</span></div>
<div style="left:287px;top:330px;width:104px;height:15px;background:#ffffff;"></div>
<div style="left:287px;top:345px;width:105px;height:1px;background:#c6c6c6;"></div>
<div style="left:391px;top:330px;width:1px;height:16px;background:#c6c6c6;"></div>
<div class="c" style="left:287px;top:330px;width:104px;height:15px;line-height:16px;color:#000;"><span class="t" style="left:2px;font-size:12.5px;transform:scaleX(0.86)">ISTCREMONE</span></div>
<div style="left:392px;top:330px;width:88px;height:15px;background:#ffffff;"></div>
<div style="left:392px;top:345px;width:89px;height:1px;background:#c6c6c6;"></div>
<div style="left:480px;top:330px;width:1px;height:16px;background:#c6c6c6;"></div>
<div class="c" style="left:392px;top:330px;width:88px;height:15px;line-height:16px;color:#000;"><span class="t" style="left:2px;font-size:12.5px;transform:scaleX(0.86)">E<i>_</i>D1<i>_</i>Z1<i>_</i>V2</span></div>
<div style="left:481px;top:330px;width:88px;height:15px;background:#ffffff;"></div>
<div style="left:481px;top:345px;width:89px;height:1px;background:#c6c6c6;"></div>
<div style="left:569px;top:330px;width:1px;height:16px;background:#c6c6c6;"></div>
<div style="left:570px;top:330px;width:88px;height:15px;background:#ffffff;"></div>
<div style="left:570px;top:345px;width:89px;height:1px;background:#c6c6c6;"></div>
<div style="left:658px;top:330px;width:1px;height:16px;background:#c6c6c6;"></div>
<div class="c" style="left:570px;top:330px;width:88px;height:15px;line-height:16px;color:#000;"><span class="t" style="left:2px;font-size:12.5px;transform:scaleX(0.86)">IS<i>_</i>Nomenclature</span></div>
<div style="left:659px;top:330px;width:72px;height:15px;background:#ffffff;"></div>
<div style="left:659px;top:345px;width:73px;height:1px;background:#c6c6c6;"></div>
<div style="left:731px;top:330px;width:1px;height:16px;background:#c6c6c6;"></div>
<div class="c" style="left:659px;top:330px;width:72px;height:15px;line-height:16px;color:#000;"><span class="t" style="left:2px;font-size:12.5px;transform:scaleX(0.86)">3</span></div>
<div style="left:732px;top:330px;width:328px;height:15px;background:#ffffff;"></div>
<div style="left:732px;top:345px;width:329px;height:1px;background:#c6c6c6;"></div>
<div style="left:1060px;top:330px;width:1px;height:16px;background:#c6c6c6;"></div>
<div class="c" style="left:732px;top:330px;width:328px;height:15px;line-height:16px;color:#000;"><span class="t" style="left:2px;font-size:12.5px;transform:scaleX(0.86)">Le VAD de dernier niveau ISTCREMONE n&#x27;est pas destiné a</span></div>
<div style="left:1061px;top:330px;width:88px;height:15px;background:#c8ffff;"></div>
<div style="left:1061px;top:345px;width:89px;height:1px;background:#c6c6c6;"></div>
<div style="left:1149px;top:330px;width:1px;height:16px;background:#c6c6c6;"></div>
<div class="c" style="left:1061px;top:330px;width:88px;height:15px;line-height:16px;color:#000;"><span class="t" style="left:2px;font-size:12.5px;transform:scaleX(0.86)">A-TRAITER</span></div>
<div style="left:1150px;top:330px;width:96px;height:15px;background:#c8ffff;"></div>
<div style="left:1150px;top:345px;width:97px;height:1px;background:#c6c6c6;"></div>
<div style="left:1246px;top:330px;width:1px;height:16px;background:#c6c6c6;"></div>
<div class="c" style="left:1150px;top:330px;width:96px;height:15px;line-height:16px;color:#000;"><span class="t" style="left:2px;font-size:12.5px;transform:scaleX(0.86)">Non assigné</span></div>
<div style="left:3px;top:346px;width:32px;height:15px;background:#e4ecf7;"></div>
<div style="left:3px;top:361px;width:32px;height:1px;background:#a6bdd7;"></div>
<div style="left:35px;top:346px;width:1px;height:16px;background:#a6bdd7;"></div>
<div class="c cc" style="left:3px;top:347px;width:32px;height:15px;line-height:16px;color:#000;"><span class="tc" style="font-size:12.5px;transform:scaleX(0.86)">8</span></div>
<div style="left:36px;top:346px;width:104px;height:15px;background:#f0f0f0;"></div>
<div style="left:36px;top:361px;width:105px;height:1px;background:#c6c6c6;"></div>
<div style="left:140px;top:346px;width:1px;height:16px;background:#c6c6c6;"></div>
<div class="c" style="left:36px;top:346px;width:104px;height:15px;line-height:16px;color:#000;"><span class="t" style="left:2px;font-size:12.5px;transform:scaleX(0.86)">ISTMENUISERIE</span></div>
<div style="left:141px;top:346px;width:104px;height:15px;background:#f0f0f0;"></div>
<div style="left:141px;top:361px;width:105px;height:1px;background:#c6c6c6;"></div>
<div style="left:245px;top:346px;width:1px;height:16px;background:#c6c6c6;"></div>
<div class="c" style="left:141px;top:346px;width:104px;height:15px;line-height:16px;color:#000;"><span class="t" style="left:2px;font-size:12.5px;transform:scaleX(0.86)">ISTMONOUVD</span></div>
<div style="left:246px;top:346px;width:40px;height:15px;background:#f0f0f0;"></div>
<div style="left:246px;top:361px;width:41px;height:1px;background:#c6c6c6;"></div>
<div style="left:286px;top:346px;width:1px;height:16px;background:#c6c6c6;"></div>
<div class="c" style="left:246px;top:346px;width:40px;height:15px;line-height:16px;color:#000;"><span class="t" style="left:2px;font-size:12.5px;transform:scaleX(0.86)">00100</span></div>
<div style="left:287px;top:346px;width:104px;height:15px;background:#f0f0f0;"></div>
<div style="left:287px;top:361px;width:105px;height:1px;background:#c6c6c6;"></div>
<div style="left:391px;top:346px;width:1px;height:16px;background:#c6c6c6;"></div>
<div class="c" style="left:287px;top:346px;width:104px;height:15px;line-height:16px;color:#000;"><span class="t" style="left:2px;font-size:12.5px;transform:scaleX(0.86)">17A0110<i>_</i>1000<i>_</i>100</span></div>
<div style="left:392px;top:346px;width:88px;height:15px;background:#f0f0f0;"></div>
<div style="left:392px;top:361px;width:89px;height:1px;background:#c6c6c6;"></div>
<div style="left:480px;top:346px;width:1px;height:16px;background:#c6c6c6;"></div>
<div class="c" style="left:392px;top:346px;width:88px;height:15px;line-height:16px;color:#000;"><span class="t" style="left:2px;font-size:12.5px;transform:scaleX(0.86)">E<i>_</i>D1<i>_</i>Z1<i>_</i>V2</span></div>
<div style="left:481px;top:346px;width:88px;height:15px;background:#f0f0f0;"></div>
<div style="left:481px;top:361px;width:89px;height:1px;background:#c6c6c6;"></div>
<div style="left:569px;top:346px;width:1px;height:16px;background:#c6c6c6;"></div>
<div style="left:570px;top:346px;width:88px;height:15px;background:#f0f0f0;"></div>
<div style="left:570px;top:361px;width:89px;height:1px;background:#c6c6c6;"></div>
<div style="left:658px;top:346px;width:1px;height:16px;background:#c6c6c6;"></div>
<div class="c" style="left:570px;top:346px;width:88px;height:15px;line-height:16px;color:#000;"><span class="t" style="left:2px;font-size:12.5px;transform:scaleX(0.86)">IS<i>_</i>Nomenclature</span></div>
<div style="left:659px;top:346px;width:72px;height:15px;background:#f0f0f0;"></div>
<div style="left:659px;top:361px;width:73px;height:1px;background:#c6c6c6;"></div>
<div style="left:731px;top:346px;width:1px;height:16px;background:#c6c6c6;"></div>
<div class="c" style="left:659px;top:346px;width:72px;height:15px;line-height:16px;color:#000;"><span class="t" style="left:2px;font-size:12.5px;transform:scaleX(0.86)">3</span></div>
<div style="left:732px;top:346px;width:328px;height:15px;background:#f0f0f0;"></div>
<div style="left:732px;top:361px;width:329px;height:1px;background:#c6c6c6;"></div>
<div style="left:1060px;top:346px;width:1px;height:16px;background:#c6c6c6;"></div>
<div class="c" style="left:732px;top:346px;width:328px;height:15px;line-height:16px;color:#000;"><span class="t" style="left:2px;font-size:12.5px;transform:scaleX(0.86)">Conversion unité de mesure non trouvée : mm/BARRE</span></div>
<div style="left:1061px;top:346px;width:88px;height:15px;background:#c8ffff;"></div>
<div style="left:1061px;top:361px;width:89px;height:1px;background:#c6c6c6;"></div>
<div style="left:1149px;top:346px;width:1px;height:16px;background:#c6c6c6;"></div>
<div class="c" style="left:1061px;top:346px;width:88px;height:15px;line-height:16px;color:#000;"><span class="t" style="left:2px;font-size:12.5px;transform:scaleX(0.86)">A-TRAITER</span></div>
<div style="left:1150px;top:346px;width:96px;height:15px;background:#c8ffff;"></div>
<div style="left:1150px;top:361px;width:97px;height:1px;background:#c6c6c6;"></div>
<div style="left:1246px;top:346px;width:1px;height:16px;background:#c6c6c6;"></div>
<div class="c" style="left:1150px;top:346px;width:96px;height:15px;line-height:16px;color:#000;"><span class="t" style="left:2px;font-size:12.5px;transform:scaleX(0.86)">Non assigné</span></div>
<div style="left:3px;top:362px;width:32px;height:15px;background:#e4ecf7;"></div>
<div style="left:3px;top:377px;width:32px;height:1px;background:#a6bdd7;"></div>
<div style="left:35px;top:362px;width:1px;height:16px;background:#a6bdd7;"></div>
<div class="c cc" style="left:3px;top:363px;width:32px;height:15px;line-height:16px;color:#000;"><span class="tc" style="font-size:12.5px;transform:scaleX(0.86)">9</span></div>
<div style="left:36px;top:362px;width:104px;height:15px;background:#ffffff;"></div>
<div style="left:36px;top:377px;width:105px;height:1px;background:#c6c6c6;"></div>
<div style="left:140px;top:362px;width:1px;height:16px;background:#c6c6c6;"></div>
<div class="c" style="left:36px;top:362px;width:104px;height:15px;line-height:16px;color:#000;"><span class="t" style="left:2px;font-size:12.5px;transform:scaleX(0.86)">ISTMENUISERIE</span></div>
<div style="left:141px;top:362px;width:104px;height:15px;background:#ffffff;"></div>
<div style="left:141px;top:377px;width:105px;height:1px;background:#c6c6c6;"></div>
<div style="left:245px;top:362px;width:1px;height:16px;background:#c6c6c6;"></div>
<div class="c" style="left:141px;top:362px;width:104px;height:15px;line-height:16px;color:#000;"><span class="t" style="left:2px;font-size:12.5px;transform:scaleX(0.86)">ISTMONOUVG</span></div>
<div style="left:246px;top:362px;width:40px;height:15px;background:#ffffff;"></div>
<div style="left:246px;top:377px;width:41px;height:1px;background:#c6c6c6;"></div>
<div style="left:286px;top:362px;width:1px;height:16px;background:#c6c6c6;"></div>
<div class="c" style="left:246px;top:362px;width:40px;height:15px;line-height:16px;color:#000;"><span class="t" style="left:2px;font-size:12.5px;transform:scaleX(0.86)">00100</span></div>
<div style="left:287px;top:362px;width:104px;height:15px;background:#ffffff;"></div>
<div style="left:287px;top:377px;width:105px;height:1px;background:#c6c6c6;"></div>
<div style="left:391px;top:362px;width:1px;height:16px;background:#c6c6c6;"></div>
<div class="c" style="left:287px;top:362px;width:104px;height:15px;line-height:16px;color:#000;"><span class="t" style="left:2px;font-size:12.5px;transform:scaleX(0.86)">17A0110<i>_</i>1000<i>_</i>100</span></div>
<div style="left:392px;top:362px;width:88px;height:15px;background:#ffffff;"></div>
<div style="left:392px;top:377px;width:89px;height:1px;background:#c6c6c6;"></div>
<div style="left:480px;top:362px;width:1px;height:16px;background:#c6c6c6;"></div>
<div class="c" style="left:392px;top:362px;width:88px;height:15px;line-height:16px;color:#000;"><span class="t" style="left:2px;font-size:12.5px;transform:scaleX(0.86)">E<i>_</i>D1<i>_</i>Z1<i>_</i>V2</span></div>
<div style="left:481px;top:362px;width:88px;height:15px;background:#ffffff;"></div>
<div style="left:481px;top:377px;width:89px;height:1px;background:#c6c6c6;"></div>
<div style="left:569px;top:362px;width:1px;height:16px;background:#c6c6c6;"></div>
<div style="left:570px;top:362px;width:88px;height:15px;background:#ffffff;"></div>
<div style="left:570px;top:377px;width:89px;height:1px;background:#c6c6c6;"></div>
<div style="left:658px;top:362px;width:1px;height:16px;background:#c6c6c6;"></div>
<div class="c" style="left:570px;top:362px;width:88px;height:15px;line-height:16px;color:#000;"><span class="t" style="left:2px;font-size:12.5px;transform:scaleX(0.86)">IS<i>_</i>Nomenclature</span></div>
<div style="left:659px;top:362px;width:72px;height:15px;background:#ffffff;"></div>
<div style="left:659px;top:377px;width:73px;height:1px;background:#c6c6c6;"></div>
<div style="left:731px;top:362px;width:1px;height:16px;background:#c6c6c6;"></div>
<div class="c" style="left:659px;top:362px;width:72px;height:15px;line-height:16px;color:#000;"><span class="t" style="left:2px;font-size:12.5px;transform:scaleX(0.86)">3</span></div>
<div style="left:732px;top:362px;width:328px;height:15px;background:#ffffff;"></div>
<div style="left:732px;top:377px;width:329px;height:1px;background:#c6c6c6;"></div>
<div style="left:1060px;top:362px;width:1px;height:16px;background:#c6c6c6;"></div>
<div class="c" style="left:732px;top:362px;width:328px;height:15px;line-height:16px;color:#000;"><span class="t" style="left:2px;font-size:12.5px;transform:scaleX(0.86)">Conversion unité de mesure non trouvée : mm/BARRE</span></div>
<div style="left:1061px;top:362px;width:88px;height:15px;background:#c8ffff;"></div>
<div style="left:1061px;top:377px;width:89px;height:1px;background:#c6c6c6;"></div>
<div style="left:1149px;top:362px;width:1px;height:16px;background:#c6c6c6;"></div>
<div class="c" style="left:1061px;top:362px;width:88px;height:15px;line-height:16px;color:#000;"><span class="t" style="left:2px;font-size:12.5px;transform:scaleX(0.86)">A-TRAITER</span></div>
<div style="left:1150px;top:362px;width:96px;height:15px;background:#c8ffff;"></div>
<div style="left:1150px;top:377px;width:97px;height:1px;background:#c6c6c6;"></div>
<div style="left:1246px;top:362px;width:1px;height:16px;background:#c6c6c6;"></div>
<div class="c" style="left:1150px;top:362px;width:96px;height:15px;line-height:16px;color:#000;"><span class="t" style="left:2px;font-size:12.5px;transform:scaleX(0.86)">Non assigné</span></div>
<div style="left:3px;top:378px;width:32px;height:15px;background:#e4ecf7;"></div>
<div style="left:3px;top:393px;width:32px;height:1px;background:#a6bdd7;"></div>
<div style="left:35px;top:378px;width:1px;height:16px;background:#a6bdd7;"></div>
<div class="c cc" style="left:3px;top:379px;width:32px;height:15px;line-height:16px;color:#000;"><span class="tc" style="font-size:12.5px;transform:scaleX(0.86)">10</span></div>
<div style="left:36px;top:378px;width:104px;height:15px;background:#f0f0f0;"></div>
<div style="left:36px;top:393px;width:105px;height:1px;background:#c6c6c6;"></div>
<div style="left:140px;top:378px;width:1px;height:16px;background:#c6c6c6;"></div>
<div class="c" style="left:36px;top:378px;width:104px;height:15px;line-height:16px;color:#000;"><span class="t" style="left:2px;font-size:12.5px;transform:scaleX(0.86)">ISTMENUISERIE</span></div>
<div style="left:141px;top:378px;width:104px;height:15px;background:#f0f0f0;"></div>
<div style="left:141px;top:393px;width:105px;height:1px;background:#c6c6c6;"></div>
<div style="left:245px;top:378px;width:1px;height:16px;background:#c6c6c6;"></div>
<div class="c" style="left:141px;top:378px;width:104px;height:15px;line-height:16px;color:#000;"><span class="t" style="left:2px;font-size:12.5px;transform:scaleX(0.86)">ISTTRAVOUVB</span></div>
<div style="left:246px;top:378px;width:40px;height:15px;background:#f0f0f0;"></div>
<div style="left:246px;top:393px;width:41px;height:1px;background:#c6c6c6;"></div>
<div style="left:286px;top:378px;width:1px;height:16px;background:#c6c6c6;"></div>
<div class="c" style="left:246px;top:378px;width:40px;height:15px;line-height:16px;color:#000;"><span class="t" style="left:2px;font-size:12.5px;transform:scaleX(0.86)">00100</span></div>
<div style="left:287px;top:378px;width:104px;height:15px;background:#f0f0f0;"></div>
<div style="left:287px;top:393px;width:105px;height:1px;background:#c6c6c6;"></div>
<div style="left:391px;top:378px;width:1px;height:16px;background:#c6c6c6;"></div>
<div class="c" style="left:287px;top:378px;width:104px;height:15px;line-height:16px;color:#000;"><span class="t" style="left:2px;font-size:12.5px;transform:scaleX(0.86)">17A0110<i>_</i>1000<i>_</i>100</span></div>
<div style="left:392px;top:378px;width:88px;height:15px;background:#f0f0f0;"></div>
<div style="left:392px;top:393px;width:89px;height:1px;background:#c6c6c6;"></div>
<div style="left:480px;top:378px;width:1px;height:16px;background:#c6c6c6;"></div>
<div class="c" style="left:392px;top:378px;width:88px;height:15px;line-height:16px;color:#000;"><span class="t" style="left:2px;font-size:12.5px;transform:scaleX(0.86)">E<i>_</i>D1<i>_</i>Z1<i>_</i>V2</span></div>
<div style="left:481px;top:378px;width:88px;height:15px;background:#f0f0f0;"></div>
<div style="left:481px;top:393px;width:89px;height:1px;background:#c6c6c6;"></div>
<div style="left:569px;top:378px;width:1px;height:16px;background:#c6c6c6;"></div>
<div style="left:570px;top:378px;width:88px;height:15px;background:#f0f0f0;"></div>
<div style="left:570px;top:393px;width:89px;height:1px;background:#c6c6c6;"></div>
<div style="left:658px;top:378px;width:1px;height:16px;background:#c6c6c6;"></div>
<div class="c" style="left:570px;top:378px;width:88px;height:15px;line-height:16px;color:#000;"><span class="t" style="left:2px;font-size:12.5px;transform:scaleX(0.86)">IS<i>_</i>Nomenclature</span></div>
<div style="left:659px;top:378px;width:72px;height:15px;background:#f0f0f0;"></div>
<div style="left:659px;top:393px;width:73px;height:1px;background:#c6c6c6;"></div>
<div style="left:731px;top:378px;width:1px;height:16px;background:#c6c6c6;"></div>
<div class="c" style="left:659px;top:378px;width:72px;height:15px;line-height:16px;color:#000;"><span class="t" style="left:2px;font-size:12.5px;transform:scaleX(0.86)">3</span></div>
<div style="left:732px;top:378px;width:328px;height:15px;background:#f0f0f0;"></div>
<div style="left:732px;top:393px;width:329px;height:1px;background:#c6c6c6;"></div>
<div style="left:1060px;top:378px;width:1px;height:16px;background:#c6c6c6;"></div>
<div class="c" style="left:732px;top:378px;width:328px;height:15px;line-height:16px;color:#000;"><span class="t" style="left:2px;font-size:12.5px;transform:scaleX(0.86)">Conversion unité de mesure non trouvée : mm/BARRE</span></div>
<div style="left:1061px;top:378px;width:88px;height:15px;background:#c8ffff;"></div>
<div style="left:1061px;top:393px;width:89px;height:1px;background:#c6c6c6;"></div>
<div style="left:1149px;top:378px;width:1px;height:16px;background:#c6c6c6;"></div>
<div class="c" style="left:1061px;top:378px;width:88px;height:15px;line-height:16px;color:#000;"><span class="t" style="left:2px;font-size:12.5px;transform:scaleX(0.86)">A-TRAITER</span></div>
<div style="left:1150px;top:378px;width:96px;height:15px;background:#c8ffff;"></div>
<div style="left:1150px;top:393px;width:97px;height:1px;background:#c6c6c6;"></div>
<div style="left:1246px;top:378px;width:1px;height:16px;background:#c6c6c6;"></div>
<div class="c" style="left:1150px;top:378px;width:96px;height:15px;line-height:16px;color:#000;"><span class="t" style="left:2px;font-size:12.5px;transform:scaleX(0.86)">Non assigné</span></div>
<div style="left:3px;top:394px;width:32px;height:15px;background:#e4ecf7;"></div>
<div style="left:3px;top:409px;width:32px;height:1px;background:#a6bdd7;"></div>
<div style="left:35px;top:394px;width:1px;height:16px;background:#a6bdd7;"></div>
<div class="c cc" style="left:3px;top:395px;width:32px;height:15px;line-height:16px;color:#000;"><span class="tc" style="font-size:12.5px;transform:scaleX(0.86)">11</span></div>
<div style="left:36px;top:394px;width:104px;height:15px;background:#ffffff;"></div>
<div style="left:36px;top:409px;width:105px;height:1px;background:#c6c6c6;"></div>
<div style="left:140px;top:394px;width:1px;height:16px;background:#c6c6c6;"></div>
<div class="c" style="left:36px;top:394px;width:104px;height:15px;line-height:16px;color:#000;"><span class="t" style="left:2px;font-size:12.5px;transform:scaleX(0.86)">ISTMENUISERIE</span></div>
<div style="left:141px;top:394px;width:104px;height:15px;background:#ffffff;"></div>
<div style="left:141px;top:409px;width:105px;height:1px;background:#c6c6c6;"></div>
<div style="left:245px;top:394px;width:1px;height:16px;background:#c6c6c6;"></div>
<div class="c" style="left:141px;top:394px;width:104px;height:15px;line-height:16px;color:#000;"><span class="t" style="left:2px;font-size:12.5px;transform:scaleX(0.86)">ISTTRAVOUVH</span></div>
<div style="left:246px;top:394px;width:40px;height:15px;background:#ffffff;"></div>
<div style="left:246px;top:409px;width:41px;height:1px;background:#c6c6c6;"></div>
<div style="left:286px;top:394px;width:1px;height:16px;background:#c6c6c6;"></div>
<div class="c" style="left:246px;top:394px;width:40px;height:15px;line-height:16px;color:#000;"><span class="t" style="left:2px;font-size:12.5px;transform:scaleX(0.86)">00100</span></div>
<div style="left:287px;top:394px;width:104px;height:15px;background:#ffffff;"></div>
<div style="left:287px;top:409px;width:105px;height:1px;background:#c6c6c6;"></div>
<div style="left:391px;top:394px;width:1px;height:16px;background:#c6c6c6;"></div>
<div class="c" style="left:287px;top:394px;width:104px;height:15px;line-height:16px;color:#000;"><span class="t" style="left:2px;font-size:12.5px;transform:scaleX(0.86)">17A0110<i>_</i>1000<i>_</i>100</span></div>
<div style="left:392px;top:394px;width:88px;height:15px;background:#ffffff;"></div>
<div style="left:392px;top:409px;width:89px;height:1px;background:#c6c6c6;"></div>
<div style="left:480px;top:394px;width:1px;height:16px;background:#c6c6c6;"></div>
<div class="c" style="left:392px;top:394px;width:88px;height:15px;line-height:16px;color:#000;"><span class="t" style="left:2px;font-size:12.5px;transform:scaleX(0.86)">E<i>_</i>D1<i>_</i>Z1<i>_</i>V2</span></div>
<div style="left:481px;top:394px;width:88px;height:15px;background:#ffffff;"></div>
<div style="left:481px;top:409px;width:89px;height:1px;background:#c6c6c6;"></div>
<div style="left:569px;top:394px;width:1px;height:16px;background:#c6c6c6;"></div>
<div style="left:570px;top:394px;width:88px;height:15px;background:#ffffff;"></div>
<div style="left:570px;top:409px;width:89px;height:1px;background:#c6c6c6;"></div>
<div style="left:658px;top:394px;width:1px;height:16px;background:#c6c6c6;"></div>
<div class="c" style="left:570px;top:394px;width:88px;height:15px;line-height:16px;color:#000;"><span class="t" style="left:2px;font-size:12.5px;transform:scaleX(0.86)">IS<i>_</i>Nomenclature</span></div>
<div style="left:659px;top:394px;width:72px;height:15px;background:#ffffff;"></div>
<div style="left:659px;top:409px;width:73px;height:1px;background:#c6c6c6;"></div>
<div style="left:731px;top:394px;width:1px;height:16px;background:#c6c6c6;"></div>
<div class="c" style="left:659px;top:394px;width:72px;height:15px;line-height:16px;color:#000;"><span class="t" style="left:2px;font-size:12.5px;transform:scaleX(0.86)">3</span></div>
<div style="left:732px;top:394px;width:328px;height:15px;background:#ffffff;"></div>
<div style="left:732px;top:409px;width:329px;height:1px;background:#c6c6c6;"></div>
<div style="left:1060px;top:394px;width:1px;height:16px;background:#c6c6c6;"></div>
<div class="c" style="left:732px;top:394px;width:328px;height:15px;line-height:16px;color:#000;"><span class="t" style="left:2px;font-size:12.5px;transform:scaleX(0.86)">Conversion unité de mesure non trouvée : mm/BARRE</span></div>
<div style="left:1061px;top:394px;width:88px;height:15px;background:#c8ffff;"></div>
<div style="left:1061px;top:409px;width:89px;height:1px;background:#c6c6c6;"></div>
<div style="left:1149px;top:394px;width:1px;height:16px;background:#c6c6c6;"></div>
<div class="c" style="left:1061px;top:394px;width:88px;height:15px;line-height:16px;color:#000;"><span class="t" style="left:2px;font-size:12.5px;transform:scaleX(0.86)">A-TRAITER</span></div>
<div style="left:1150px;top:394px;width:96px;height:15px;background:#c8ffff;"></div>
<div style="left:1150px;top:409px;width:97px;height:1px;background:#c6c6c6;"></div>
<div style="left:1246px;top:394px;width:1px;height:16px;background:#c6c6c6;"></div>
<div class="c" style="left:1150px;top:394px;width:96px;height:15px;line-height:16px;color:#000;"><span class="t" style="left:2px;font-size:12.5px;transform:scaleX(0.86)">Non assigné</span></div>
<div style="left:3px;top:410px;width:32px;height:15px;background:#e4ecf7;"></div>
<div style="left:3px;top:425px;width:32px;height:1px;background:#a6bdd7;"></div>
<div style="left:35px;top:410px;width:1px;height:16px;background:#a6bdd7;"></div>
<div class="c cc" style="left:3px;top:411px;width:32px;height:15px;line-height:16px;color:#000;"><span class="tc" style="font-size:12.5px;transform:scaleX(0.86)">12</span></div>
<div style="left:36px;top:410px;width:104px;height:15px;background:#f0f0f0;"></div>
<div style="left:36px;top:425px;width:105px;height:1px;background:#c6c6c6;"></div>
<div style="left:140px;top:410px;width:1px;height:16px;background:#c6c6c6;"></div>
<div class="c" style="left:36px;top:410px;width:104px;height:15px;line-height:16px;color:#000;"><span class="t" style="left:2px;font-size:12.5px;transform:scaleX(0.86)">ISTMENUISERIE</span></div>
<div style="left:141px;top:410px;width:104px;height:15px;background:#f0f0f0;"></div>
<div style="left:141px;top:425px;width:105px;height:1px;background:#c6c6c6;"></div>
<div style="left:245px;top:410px;width:1px;height:16px;background:#c6c6c6;"></div>
<div class="c" style="left:141px;top:410px;width:104px;height:15px;line-height:16px;color:#000;"><span class="t" style="left:2px;font-size:12.5px;transform:scaleX(0.86)">ISTPARCLOSE<i>_</i>MO</span></div>
<div style="left:246px;top:410px;width:40px;height:15px;background:#f0f0f0;"></div>
<div style="left:246px;top:425px;width:41px;height:1px;background:#c6c6c6;"></div>
<div style="left:286px;top:410px;width:1px;height:16px;background:#c6c6c6;"></div>
<div class="c" style="left:246px;top:410px;width:40px;height:15px;line-height:16px;color:#000;"><span class="t" style="left:2px;font-size:12.5px;transform:scaleX(0.86)">00100</span></div>
<div style="left:287px;top:410px;width:104px;height:15px;background:#f0f0f0;"></div>
<div style="left:287px;top:425px;width:105px;height:1px;background:#c6c6c6;"></div>
<div style="left:391px;top:410px;width:1px;height:16px;background:#c6c6c6;"></div>
<div class="c" style="left:287px;top:410px;width:104px;height:15px;line-height:16px;color:#000;"><span class="t" style="left:2px;font-size:12.5px;transform:scaleX(0.86)">ISTPARCLOSE<i>_</i>MO</span></div>
<div style="left:392px;top:410px;width:88px;height:15px;background:#f0f0f0;"></div>
<div style="left:392px;top:425px;width:89px;height:1px;background:#c6c6c6;"></div>
<div style="left:480px;top:410px;width:1px;height:16px;background:#c6c6c6;"></div>
<div class="c" style="left:392px;top:410px;width:88px;height:15px;line-height:16px;color:#000;"><span class="t" style="left:2px;font-size:12.5px;transform:scaleX(0.86)">E<i>_</i>D1<i>_</i>Z1<i>_</i>V1<i>_</i>R</span></div>
<div style="left:481px;top:410px;width:88px;height:15px;background:#f0f0f0;"></div>
<div style="left:481px;top:425px;width:89px;height:1px;background:#c6c6c6;"></div>
<div style="left:569px;top:410px;width:1px;height:16px;background:#c6c6c6;"></div>
<div style="left:570px;top:410px;width:88px;height:15px;background:#f0f0f0;"></div>
<div style="left:570px;top:425px;width:89px;height:1px;background:#c6c6c6;"></div>
<div style="left:658px;top:410px;width:1px;height:16px;background:#c6c6c6;"></div>
<div class="c" style="left:570px;top:410px;width:88px;height:15px;line-height:16px;color:#000;"><span class="t" style="left:2px;font-size:12.5px;transform:scaleX(0.86)">IS<i>_</i>Nomenclature</span></div>
<div style="left:659px;top:410px;width:72px;height:15px;background:#f0f0f0;"></div>
<div style="left:659px;top:425px;width:73px;height:1px;background:#c6c6c6;"></div>
<div style="left:731px;top:410px;width:1px;height:16px;background:#c6c6c6;"></div>
<div class="c" style="left:659px;top:410px;width:72px;height:15px;line-height:16px;color:#000;"><span class="t" style="left:2px;font-size:12.5px;transform:scaleX(0.86)">3</span></div>
<div style="left:732px;top:410px;width:328px;height:15px;background:#f0f0f0;"></div>
<div style="left:732px;top:425px;width:329px;height:1px;background:#c6c6c6;"></div>
<div style="left:1060px;top:410px;width:1px;height:16px;background:#c6c6c6;"></div>
<div class="c" style="left:732px;top:410px;width:328px;height:15px;line-height:16px;color:#000;"><span class="t" style="left:2px;font-size:12.5px;transform:scaleX(0.86)">Le VAD de dernier niveau ISTPARCLOSE<i>_</i>MOND<i>_</i>PRF n&#x27;est pas</span></div>
<div style="left:1061px;top:410px;width:88px;height:15px;background:#c8ffff;"></div>
<div style="left:1061px;top:425px;width:89px;height:1px;background:#c6c6c6;"></div>
<div style="left:1149px;top:410px;width:1px;height:16px;background:#c6c6c6;"></div>
<div class="c" style="left:1061px;top:410px;width:88px;height:15px;line-height:16px;color:#000;"><span class="t" style="left:2px;font-size:12.5px;transform:scaleX(0.86)">A-TRAITER</span></div>
<div style="left:1150px;top:410px;width:96px;height:15px;background:#c8ffff;"></div>
<div style="left:1150px;top:425px;width:97px;height:1px;background:#c6c6c6;"></div>
<div style="left:1246px;top:410px;width:1px;height:16px;background:#c6c6c6;"></div>
<div class="c" style="left:1150px;top:410px;width:96px;height:15px;line-height:16px;color:#000;"><span class="t" style="left:2px;font-size:12.5px;transform:scaleX(0.86)">Non assigné</span></div>
<div style="left:3px;top:426px;width:32px;height:15px;background:#e4ecf7;"></div>
<div style="left:3px;top:441px;width:32px;height:1px;background:#a6bdd7;"></div>
<div style="left:35px;top:426px;width:1px;height:16px;background:#a6bdd7;"></div>
<div class="c cc" style="left:3px;top:427px;width:32px;height:15px;line-height:16px;color:#000;"><span class="tc" style="font-size:12.5px;transform:scaleX(0.86)">13</span></div>
<div style="left:36px;top:426px;width:104px;height:15px;background:#ffffff;"></div>
<div style="left:36px;top:441px;width:105px;height:1px;background:#c6c6c6;"></div>
<div style="left:140px;top:426px;width:1px;height:16px;background:#c6c6c6;"></div>
<div class="c" style="left:36px;top:426px;width:104px;height:15px;line-height:16px;color:#000;"><span class="t" style="left:2px;font-size:12.5px;transform:scaleX(0.86)">ISTMENUISERIE</span></div>
<div style="left:141px;top:426px;width:104px;height:15px;background:#ffffff;"></div>
<div style="left:141px;top:441px;width:105px;height:1px;background:#c6c6c6;"></div>
<div style="left:245px;top:426px;width:1px;height:16px;background:#c6c6c6;"></div>
<div class="c" style="left:141px;top:426px;width:104px;height:15px;line-height:16px;color:#000;"><span class="t" style="left:2px;font-size:12.5px;transform:scaleX(0.86)">ISTPARCLOSE<i>_</i>MO</span></div>
<div style="left:246px;top:426px;width:40px;height:15px;background:#ffffff;"></div>
<div style="left:246px;top:441px;width:41px;height:1px;background:#c6c6c6;"></div>
<div style="left:286px;top:426px;width:1px;height:16px;background:#c6c6c6;"></div>
<div class="c" style="left:246px;top:426px;width:40px;height:15px;line-height:16px;color:#000;"><span class="t" style="left:2px;font-size:12.5px;transform:scaleX(0.86)">00100</span></div>
<div style="left:287px;top:426px;width:104px;height:15px;background:#ffffff;"></div>
<div style="left:287px;top:441px;width:105px;height:1px;background:#c6c6c6;"></div>
<div style="left:391px;top:426px;width:1px;height:16px;background:#c6c6c6;"></div>
<div class="c" style="left:287px;top:426px;width:104px;height:15px;line-height:16px;color:#000;"><span class="t" style="left:2px;font-size:12.5px;transform:scaleX(0.86)">ISTPARCLOSE<i>_</i>MO</span></div>
<div style="left:392px;top:426px;width:88px;height:15px;background:#ffffff;"></div>
<div style="left:392px;top:441px;width:89px;height:1px;background:#c6c6c6;"></div>
<div style="left:480px;top:426px;width:1px;height:16px;background:#c6c6c6;"></div>
<div class="c" style="left:392px;top:426px;width:88px;height:15px;line-height:16px;color:#000;"><span class="t" style="left:2px;font-size:12.5px;transform:scaleX(0.86)">E<i>_</i>D1<i>_</i>Z1<i>_</i>V1<i>_</i>R</span></div>
<div style="left:481px;top:426px;width:88px;height:15px;background:#ffffff;"></div>
<div style="left:481px;top:441px;width:89px;height:1px;background:#c6c6c6;"></div>
<div style="left:569px;top:426px;width:1px;height:16px;background:#c6c6c6;"></div>
<div style="left:570px;top:426px;width:88px;height:15px;background:#ffffff;"></div>
<div style="left:570px;top:441px;width:89px;height:1px;background:#c6c6c6;"></div>
<div style="left:658px;top:426px;width:1px;height:16px;background:#c6c6c6;"></div>
<div class="c" style="left:570px;top:426px;width:88px;height:15px;line-height:16px;color:#000;"><span class="t" style="left:2px;font-size:12.5px;transform:scaleX(0.86)">IS<i>_</i>Nomenclature</span></div>
<div style="left:659px;top:426px;width:72px;height:15px;background:#ffffff;"></div>
<div style="left:659px;top:441px;width:73px;height:1px;background:#c6c6c6;"></div>
<div style="left:731px;top:426px;width:1px;height:16px;background:#c6c6c6;"></div>
<div class="c" style="left:659px;top:426px;width:72px;height:15px;line-height:16px;color:#000;"><span class="t" style="left:2px;font-size:12.5px;transform:scaleX(0.86)">3</span></div>
<div style="left:732px;top:426px;width:328px;height:15px;background:#ffffff;"></div>
<div style="left:732px;top:441px;width:329px;height:1px;background:#c6c6c6;"></div>
<div style="left:1060px;top:426px;width:1px;height:16px;background:#c6c6c6;"></div>
<div class="c" style="left:732px;top:426px;width:328px;height:15px;line-height:16px;color:#000;"><span class="t" style="left:2px;font-size:12.5px;transform:scaleX(0.86)">Le VAD de dernier niveau ISTPARCLOSE<i>_</i>MONG<i>_</i>PRF n&#x27;est pas</span></div>
<div style="left:1061px;top:426px;width:88px;height:15px;background:#c8ffff;"></div>
<div style="left:1061px;top:441px;width:89px;height:1px;background:#c6c6c6;"></div>
<div style="left:1149px;top:426px;width:1px;height:16px;background:#c6c6c6;"></div>
<div class="c" style="left:1061px;top:426px;width:88px;height:15px;line-height:16px;color:#000;"><span class="t" style="left:2px;font-size:12.5px;transform:scaleX(0.86)">A-TRAITER</span></div>
<div style="left:1150px;top:426px;width:96px;height:15px;background:#c8ffff;"></div>
<div style="left:1150px;top:441px;width:97px;height:1px;background:#c6c6c6;"></div>
<div style="left:1246px;top:426px;width:1px;height:16px;background:#c6c6c6;"></div>
<div class="c" style="left:1150px;top:426px;width:96px;height:15px;line-height:16px;color:#000;"><span class="t" style="left:2px;font-size:12.5px;transform:scaleX(0.86)">Non assigné</span></div>
<div style="left:3px;top:442px;width:32px;height:15px;background:#e4ecf7;"></div>
<div style="left:3px;top:457px;width:32px;height:1px;background:#a6bdd7;"></div>
<div style="left:35px;top:442px;width:1px;height:16px;background:#a6bdd7;"></div>
<div class="c cc" style="left:3px;top:443px;width:32px;height:15px;line-height:16px;color:#000;"><span class="tc" style="font-size:12.5px;transform:scaleX(0.86)">14</span></div>
<div style="left:36px;top:442px;width:104px;height:15px;background:#f0f0f0;"></div>
<div style="left:36px;top:457px;width:105px;height:1px;background:#c6c6c6;"></div>
<div style="left:140px;top:442px;width:1px;height:16px;background:#c6c6c6;"></div>
<div class="c" style="left:36px;top:442px;width:104px;height:15px;line-height:16px;color:#000;"><span class="t" style="left:2px;font-size:12.5px;transform:scaleX(0.86)">ISTMENUISERIE</span></div>
<div style="left:141px;top:442px;width:104px;height:15px;background:#f0f0f0;"></div>
<div style="left:141px;top:457px;width:105px;height:1px;background:#c6c6c6;"></div>
<div style="left:245px;top:442px;width:1px;height:16px;background:#c6c6c6;"></div>
<div class="c" style="left:141px;top:442px;width:104px;height:15px;line-height:16px;color:#000;"><span class="t" style="left:2px;font-size:12.5px;transform:scaleX(0.86)">ISTPARCLOSE<i>_</i>TR</span></div>
<div style="left:246px;top:442px;width:40px;height:15px;background:#f0f0f0;"></div>
<div style="left:246px;top:457px;width:41px;height:1px;background:#c6c6c6;"></div>
<div style="left:286px;top:442px;width:1px;height:16px;background:#c6c6c6;"></div>
<div class="c" style="left:246px;top:442px;width:40px;height:15px;line-height:16px;color:#000;"><span class="t" style="left:2px;font-size:12.5px;transform:scaleX(0.86)">00100</span></div>
<div style="left:287px;top:442px;width:104px;height:15px;background:#f0f0f0;"></div>
<div style="left:287px;top:457px;width:105px;height:1px;background:#c6c6c6;"></div>
<div style="left:391px;top:442px;width:1px;height:16px;background:#c6c6c6;"></div>
<div class="c" style="left:287px;top:442px;width:104px;height:15px;line-height:16px;color:#000;"><span class="t" style="left:2px;font-size:12.5px;transform:scaleX(0.86)">ISTPARCLOSE<i>_</i>TR</span></div>
<div style="left:392px;top:442px;width:88px;height:15px;background:#f0f0f0;"></div>
<div style="left:392px;top:457px;width:89px;height:1px;background:#c6c6c6;"></div>
<div style="left:480px;top:442px;width:1px;height:16px;background:#c6c6c6;"></div>
<div class="c" style="left:392px;top:442px;width:88px;height:15px;line-height:16px;color:#000;"><span class="t" style="left:2px;font-size:12.5px;transform:scaleX(0.86)">E<i>_</i>D1<i>_</i>Z1<i>_</i>V1<i>_</i>R</span></div>
<div style="left:481px;top:442px;width:88px;height:15px;background:#f0f0f0;"></div>
<div style="left:481px;top:457px;width:89px;height:1px;background:#c6c6c6;"></div>
<div style="left:569px;top:442px;width:1px;height:16px;background:#c6c6c6;"></div>
<div style="left:570px;top:442px;width:88px;height:15px;background:#f0f0f0;"></div>
<div style="left:570px;top:457px;width:89px;height:1px;background:#c6c6c6;"></div>
<div style="left:658px;top:442px;width:1px;height:16px;background:#c6c6c6;"></div>
<div class="c" style="left:570px;top:442px;width:88px;height:15px;line-height:16px;color:#000;"><span class="t" style="left:2px;font-size:12.5px;transform:scaleX(0.86)">IS<i>_</i>Nomenclature</span></div>
<div style="left:659px;top:442px;width:72px;height:15px;background:#f0f0f0;"></div>
<div style="left:659px;top:457px;width:73px;height:1px;background:#c6c6c6;"></div>
<div style="left:731px;top:442px;width:1px;height:16px;background:#c6c6c6;"></div>
<div class="c" style="left:659px;top:442px;width:72px;height:15px;line-height:16px;color:#000;"><span class="t" style="left:2px;font-size:12.5px;transform:scaleX(0.86)">3</span></div>
<div style="left:732px;top:442px;width:328px;height:15px;background:#f0f0f0;"></div>
<div style="left:732px;top:457px;width:329px;height:1px;background:#c6c6c6;"></div>
<div style="left:1060px;top:442px;width:1px;height:16px;background:#c6c6c6;"></div>
<div class="c" style="left:732px;top:442px;width:328px;height:15px;line-height:16px;color:#000;"><span class="t" style="left:2px;font-size:12.5px;transform:scaleX(0.86)">Le VAD de dernier niveau ISTPARCLOSE<i>_</i>TRAVB<i>_</i>PRF n&#x27;est pas</span></div>
<div style="left:1061px;top:442px;width:88px;height:15px;background:#c8ffff;"></div>
<div style="left:1061px;top:457px;width:89px;height:1px;background:#c6c6c6;"></div>
<div style="left:1149px;top:442px;width:1px;height:16px;background:#c6c6c6;"></div>
<div class="c" style="left:1061px;top:442px;width:88px;height:15px;line-height:16px;color:#000;"><span class="t" style="left:2px;font-size:12.5px;transform:scaleX(0.86)">A-TRAITER</span></div>
<div style="left:1150px;top:442px;width:96px;height:15px;background:#c8ffff;"></div>
<div style="left:1150px;top:457px;width:97px;height:1px;background:#c6c6c6;"></div>
<div style="left:1246px;top:442px;width:1px;height:16px;background:#c6c6c6;"></div>
<div class="c" style="left:1150px;top:442px;width:96px;height:15px;line-height:16px;color:#000;"><span class="t" style="left:2px;font-size:12.5px;transform:scaleX(0.86)">Non assigné</span></div>
<div style="left:3px;top:458px;width:32px;height:15px;background:#e4ecf7;"></div>
<div style="left:3px;top:473px;width:32px;height:1px;background:#a6bdd7;"></div>
<div style="left:35px;top:458px;width:1px;height:16px;background:#a6bdd7;"></div>
<div class="c cc" style="left:3px;top:459px;width:32px;height:15px;line-height:16px;color:#000;"><span class="tc" style="font-size:12.5px;transform:scaleX(0.86)">15</span></div>
<div style="left:36px;top:458px;width:104px;height:15px;background:#ffffff;"></div>
<div style="left:36px;top:473px;width:105px;height:1px;background:#c6c6c6;"></div>
<div style="left:140px;top:458px;width:1px;height:16px;background:#c6c6c6;"></div>
<div class="c" style="left:36px;top:458px;width:104px;height:15px;line-height:16px;color:#000;"><span class="t" style="left:2px;font-size:12.5px;transform:scaleX(0.86)">ISTMENUISERIE</span></div>
<div style="left:141px;top:458px;width:104px;height:15px;background:#ffffff;"></div>
<div style="left:141px;top:473px;width:105px;height:1px;background:#c6c6c6;"></div>
<div style="left:245px;top:458px;width:1px;height:16px;background:#c6c6c6;"></div>
<div class="c" style="left:141px;top:458px;width:104px;height:15px;line-height:16px;color:#000;"><span class="t" style="left:2px;font-size:12.5px;transform:scaleX(0.86)">ISTPARCLOSE<i>_</i>TR</span></div>
<div style="left:246px;top:458px;width:40px;height:15px;background:#ffffff;"></div>
<div style="left:246px;top:473px;width:41px;height:1px;background:#c6c6c6;"></div>
<div style="left:286px;top:458px;width:1px;height:16px;background:#c6c6c6;"></div>
<div class="c" style="left:246px;top:458px;width:40px;height:15px;line-height:16px;color:#000;"><span class="t" style="left:2px;font-size:12.5px;transform:scaleX(0.86)">00100</span></div>
<div style="left:287px;top:458px;width:104px;height:15px;background:#ffffff;"></div>
<div style="left:287px;top:473px;width:105px;height:1px;background:#c6c6c6;"></div>
<div style="left:391px;top:458px;width:1px;height:16px;background:#c6c6c6;"></div>
<div class="c" style="left:287px;top:458px;width:104px;height:15px;line-height:16px;color:#000;"><span class="t" style="left:2px;font-size:12.5px;transform:scaleX(0.86)">ISTPARCLOSE<i>_</i>TR</span></div>
<div style="left:392px;top:458px;width:88px;height:15px;background:#ffffff;"></div>
<div style="left:392px;top:473px;width:89px;height:1px;background:#c6c6c6;"></div>
<div style="left:480px;top:458px;width:1px;height:16px;background:#c6c6c6;"></div>
<div class="c" style="left:392px;top:458px;width:88px;height:15px;line-height:16px;color:#000;"><span class="t" style="left:2px;font-size:12.5px;transform:scaleX(0.86)">E<i>_</i>D1<i>_</i>Z1<i>_</i>V1<i>_</i>R</span></div>
<div style="left:481px;top:458px;width:88px;height:15px;background:#ffffff;"></div>
<div style="left:481px;top:473px;width:89px;height:1px;background:#c6c6c6;"></div>
<div style="left:569px;top:458px;width:1px;height:16px;background:#c6c6c6;"></div>
<div style="left:570px;top:458px;width:88px;height:15px;background:#ffffff;"></div>
<div style="left:570px;top:473px;width:89px;height:1px;background:#c6c6c6;"></div>
<div style="left:658px;top:458px;width:1px;height:16px;background:#c6c6c6;"></div>
<div class="c" style="left:570px;top:458px;width:88px;height:15px;line-height:16px;color:#000;"><span class="t" style="left:2px;font-size:12.5px;transform:scaleX(0.86)">IS<i>_</i>Nomenclature</span></div>
<div style="left:659px;top:458px;width:72px;height:15px;background:#ffffff;"></div>
<div style="left:659px;top:473px;width:73px;height:1px;background:#c6c6c6;"></div>
<div style="left:731px;top:458px;width:1px;height:16px;background:#c6c6c6;"></div>
<div class="c" style="left:659px;top:458px;width:72px;height:15px;line-height:16px;color:#000;"><span class="t" style="left:2px;font-size:12.5px;transform:scaleX(0.86)">3</span></div>
<div style="left:732px;top:458px;width:328px;height:15px;background:#ffffff;"></div>
<div style="left:732px;top:473px;width:329px;height:1px;background:#c6c6c6;"></div>
<div style="left:1060px;top:458px;width:1px;height:16px;background:#c6c6c6;"></div>
<div class="c" style="left:732px;top:458px;width:328px;height:15px;line-height:16px;color:#000;"><span class="t" style="left:2px;font-size:12.5px;transform:scaleX(0.86)">Le VAD de dernier niveau ISTPARCLOSE<i>_</i>TRAVH<i>_</i>PRF n&#x27;est pas</span></div>
<div style="left:1061px;top:458px;width:88px;height:15px;background:#c8ffff;"></div>
<div style="left:1061px;top:473px;width:89px;height:1px;background:#c6c6c6;"></div>
<div style="left:1149px;top:458px;width:1px;height:16px;background:#c6c6c6;"></div>
<div class="c" style="left:1061px;top:458px;width:88px;height:15px;line-height:16px;color:#000;"><span class="t" style="left:2px;font-size:12.5px;transform:scaleX(0.86)">A-TRAITER</span></div>
<div style="left:1150px;top:458px;width:96px;height:15px;background:#c8ffff;"></div>
<div style="left:1150px;top:473px;width:97px;height:1px;background:#c6c6c6;"></div>
<div style="left:1246px;top:458px;width:1px;height:16px;background:#c6c6c6;"></div>
<div class="c" style="left:1150px;top:458px;width:96px;height:15px;line-height:16px;color:#000;"><span class="t" style="left:2px;font-size:12.5px;transform:scaleX(0.86)">Non assigné</span></div>
<div style="left:3px;top:474px;width:32px;height:15px;background:#e4ecf7;"></div>
<div style="left:3px;top:489px;width:32px;height:1px;background:#a6bdd7;"></div>
<div style="left:35px;top:474px;width:1px;height:16px;background:#a6bdd7;"></div>
<div class="c cc" style="left:3px;top:475px;width:32px;height:15px;line-height:16px;color:#000;"><span class="tc" style="font-size:12.5px;transform:scaleX(0.86)">16</span></div>
<div style="left:36px;top:474px;width:104px;height:15px;background:#f0f0f0;"></div>
<div style="left:36px;top:489px;width:105px;height:1px;background:#c6c6c6;"></div>
<div style="left:140px;top:474px;width:1px;height:16px;background:#c6c6c6;"></div>
<div class="c" style="left:36px;top:474px;width:104px;height:15px;line-height:16px;color:#000;"><span class="t" style="left:2px;font-size:12.5px;transform:scaleX(0.86)">ISTMENUISERIE</span></div>
<div style="left:141px;top:474px;width:104px;height:15px;background:#f0f0f0;"></div>
<div style="left:141px;top:489px;width:105px;height:1px;background:#c6c6c6;"></div>
<div style="left:245px;top:474px;width:1px;height:16px;background:#c6c6c6;"></div>
<div class="c" style="left:141px;top:474px;width:104px;height:15px;line-height:16px;color:#000;"><span class="t" style="left:2px;font-size:12.5px;transform:scaleX(0.86)">ISTREMP</span></div>
<div style="left:246px;top:474px;width:40px;height:15px;background:#f0f0f0;"></div>
<div style="left:246px;top:489px;width:41px;height:1px;background:#c6c6c6;"></div>
<div style="left:286px;top:474px;width:1px;height:16px;background:#c6c6c6;"></div>
<div class="c" style="left:246px;top:474px;width:40px;height:15px;line-height:16px;color:#000;"><span class="t" style="left:2px;font-size:12.5px;transform:scaleX(0.86)">00100</span></div>
<div style="left:287px;top:474px;width:104px;height:15px;background:#f0f0f0;"></div>
<div style="left:287px;top:489px;width:105px;height:1px;background:#c6c6c6;"></div>
<div style="left:391px;top:474px;width:1px;height:16px;background:#c6c6c6;"></div>
<div class="c" style="left:287px;top:474px;width:104px;height:15px;line-height:16px;color:#000;"><span class="t" style="left:2px;font-size:12.5px;transform:scaleX(0.86)">ISTVITRAGE</span></div>
<div style="left:392px;top:474px;width:88px;height:15px;background:#f0f0f0;"></div>
<div style="left:392px;top:489px;width:89px;height:1px;background:#c6c6c6;"></div>
<div style="left:480px;top:474px;width:1px;height:16px;background:#c6c6c6;"></div>
<div class="c" style="left:392px;top:474px;width:88px;height:15px;line-height:16px;color:#000;"><span class="t" style="left:2px;font-size:12.5px;transform:scaleX(0.86)">E<i>_</i>D1<i>_</i>Z1<i>_</i>V1<i>_</i>R</span></div>
<div style="left:481px;top:474px;width:88px;height:15px;background:#f0f0f0;"></div>
<div style="left:481px;top:489px;width:89px;height:1px;background:#c6c6c6;"></div>
<div style="left:569px;top:474px;width:1px;height:16px;background:#c6c6c6;"></div>
<div style="left:570px;top:474px;width:88px;height:15px;background:#f0f0f0;"></div>
<div style="left:570px;top:489px;width:89px;height:1px;background:#c6c6c6;"></div>
<div style="left:658px;top:474px;width:1px;height:16px;background:#c6c6c6;"></div>
<div class="c" style="left:570px;top:474px;width:88px;height:15px;line-height:16px;color:#000;"><span class="t" style="left:2px;font-size:12.5px;transform:scaleX(0.86)">IS<i>_</i>Nomenclature</span></div>
<div style="left:659px;top:474px;width:72px;height:15px;background:#f0f0f0;"></div>
<div style="left:659px;top:489px;width:73px;height:1px;background:#c6c6c6;"></div>
<div style="left:731px;top:474px;width:1px;height:16px;background:#c6c6c6;"></div>
<div class="c" style="left:659px;top:474px;width:72px;height:15px;line-height:16px;color:#000;"><span class="t" style="left:2px;font-size:12.5px;transform:scaleX(0.86)">3</span></div>
<div style="left:732px;top:474px;width:328px;height:15px;background:#f0f0f0;"></div>
<div style="left:732px;top:489px;width:329px;height:1px;background:#c6c6c6;"></div>
<div style="left:1060px;top:474px;width:1px;height:16px;background:#c6c6c6;"></div>
<div class="c" style="left:732px;top:474px;width:328px;height:15px;line-height:16px;color:#000;"><span class="t" style="left:2px;font-size:12.5px;transform:scaleX(0.86)">Le VAD de dernier niveau ISTVITRAGE n&#x27;est pas destiné a générer</span></div>
<div style="left:1061px;top:474px;width:88px;height:15px;background:#c8ffff;"></div>
<div style="left:1061px;top:489px;width:89px;height:1px;background:#c6c6c6;"></div>
<div style="left:1149px;top:474px;width:1px;height:16px;background:#c6c6c6;"></div>
<div class="c" style="left:1061px;top:474px;width:88px;height:15px;line-height:16px;color:#000;"><span class="t" style="left:2px;font-size:12.5px;transform:scaleX(0.86)">A-TRAITER</span></div>
<div style="left:1150px;top:474px;width:96px;height:15px;background:#c8ffff;"></div>
<div style="left:1150px;top:489px;width:97px;height:1px;background:#c6c6c6;"></div>
<div style="left:1246px;top:474px;width:1px;height:16px;background:#c6c6c6;"></div>
<div class="c" style="left:1150px;top:474px;width:96px;height:15px;line-height:16px;color:#000;"><span class="t" style="left:2px;font-size:12.5px;transform:scaleX(0.86)">Non assigné</span></div>
<div style="left:3px;top:490px;width:32px;height:15px;background:#e4ecf7;"></div>
<div style="left:3px;top:505px;width:32px;height:1px;background:#a6bdd7;"></div>
<div style="left:35px;top:490px;width:1px;height:16px;background:#a6bdd7;"></div>
<div class="c cc" style="left:3px;top:491px;width:32px;height:15px;line-height:16px;color:#000;"><span class="tc" style="font-size:12.5px;transform:scaleX(0.86)">17</span></div>
<div style="left:36px;top:490px;width:104px;height:15px;background:#ffffff;"></div>
<div style="left:36px;top:505px;width:105px;height:1px;background:#c6c6c6;"></div>
<div style="left:140px;top:490px;width:1px;height:16px;background:#c6c6c6;"></div>
<div class="c" style="left:36px;top:490px;width:104px;height:15px;line-height:16px;color:#000;"><span class="t" style="left:2px;font-size:12.5px;transform:scaleX(0.86)">ISTMENUISERIE</span></div>
<div style="left:141px;top:490px;width:104px;height:15px;background:#ffffff;"></div>
<div style="left:141px;top:505px;width:105px;height:1px;background:#c6c6c6;"></div>
<div style="left:245px;top:490px;width:1px;height:16px;background:#c6c6c6;"></div>
<div class="c" style="left:141px;top:490px;width:104px;height:15px;line-height:16px;color:#000;"><span class="t" style="left:2px;font-size:12.5px;transform:scaleX(0.86)">ISTQUINCAILLERIE</span></div>
<div style="left:246px;top:490px;width:40px;height:15px;background:#ffffff;"></div>
<div style="left:246px;top:505px;width:41px;height:1px;background:#c6c6c6;"></div>
<div style="left:286px;top:490px;width:1px;height:16px;background:#c6c6c6;"></div>
<div class="c" style="left:246px;top:490px;width:40px;height:15px;line-height:16px;color:#000;"><span class="t" style="left:2px;font-size:12.5px;transform:scaleX(0.86)">690</span></div>
<div style="left:287px;top:490px;width:104px;height:15px;background:#ffffff;"></div>
<div style="left:287px;top:505px;width:105px;height:1px;background:#c6c6c6;"></div>
<div style="left:391px;top:490px;width:1px;height:16px;background:#c6c6c6;"></div>
<div class="c" style="left:287px;top:490px;width:104px;height:15px;line-height:16px;color:#000;"><span class="t" style="left:2px;font-size:12.5px;transform:scaleX(0.86)">IST<i>_</i>POIGNEE<i>_</i>INT</span></div>
<div style="left:392px;top:490px;width:88px;height:15px;background:#ffffff;"></div>
<div style="left:392px;top:505px;width:89px;height:1px;background:#c6c6c6;"></div>
<div style="left:480px;top:490px;width:1px;height:16px;background:#c6c6c6;"></div>
<div class="c" style="left:392px;top:490px;width:88px;height:15px;line-height:16px;color:#000;"><span class="t" style="left:2px;font-size:12.5px;transform:scaleX(0.86)">E<i>_</i>D1<i>_</i>Z1<i>_</i>V1</span></div>
<div style="left:481px;top:490px;width:88px;height:15px;background:#ffffff;"></div>
<div style="left:481px;top:505px;width:89px;height:1px;background:#c6c6c6;"></div>
<div style="left:569px;top:490px;width:1px;height:16px;background:#c6c6c6;"></div>
<div style="left:570px;top:490px;width:88px;height:15px;background:#ffffff;"></div>
<div style="left:570px;top:505px;width:89px;height:1px;background:#c6c6c6;"></div>
<div style="left:658px;top:490px;width:1px;height:16px;background:#c6c6c6;"></div>
<div class="c" style="left:570px;top:490px;width:88px;height:15px;line-height:16px;color:#000;"><span class="t" style="left:2px;font-size:12.5px;transform:scaleX(0.86)">IS<i>_</i>Nomenclature</span></div>
<div style="left:659px;top:490px;width:72px;height:15px;background:#ffffff;"></div>
<div style="left:659px;top:505px;width:73px;height:1px;background:#c6c6c6;"></div>
<div style="left:731px;top:490px;width:1px;height:16px;background:#c6c6c6;"></div>
<div class="c" style="left:659px;top:490px;width:72px;height:15px;line-height:16px;color:#000;"><span class="t" style="left:2px;font-size:12.5px;transform:scaleX(0.86)">3</span></div>
<div style="left:732px;top:490px;width:328px;height:15px;background:#ffffff;"></div>
<div style="left:732px;top:505px;width:329px;height:1px;background:#c6c6c6;"></div>
<div style="left:1060px;top:490px;width:1px;height:16px;background:#c6c6c6;"></div>
<div class="c" style="left:732px;top:490px;width:328px;height:15px;line-height:16px;color:#000;"><span class="t" style="left:2px;font-size:12.5px;transform:scaleX(0.86)">Le VAD de dernier niveau IST<i>_</i>POIGNEE<i>_</i>INT n&#x27;est pas destiné a</span></div>
<div style="left:1061px;top:490px;width:88px;height:15px;background:#c8ffff;"></div>
<div style="left:1061px;top:505px;width:89px;height:1px;background:#c6c6c6;"></div>
<div style="left:1149px;top:490px;width:1px;height:16px;background:#c6c6c6;"></div>
<div class="c" style="left:1061px;top:490px;width:88px;height:15px;line-height:16px;color:#000;"><span class="t" style="left:2px;font-size:12.5px;transform:scaleX(0.86)">A-TRAITER</span></div>
<div style="left:1150px;top:490px;width:96px;height:15px;background:#c8ffff;"></div>
<div style="left:1150px;top:505px;width:97px;height:1px;background:#c6c6c6;"></div>
<div style="left:1246px;top:490px;width:1px;height:16px;background:#c6c6c6;"></div>
<div class="c" style="left:1150px;top:490px;width:96px;height:15px;line-height:16px;color:#000;"><span class="t" style="left:2px;font-size:12.5px;transform:scaleX(0.86)">Non assigné</span></div>
<div style="left:3px;top:506px;width:32px;height:15px;background:#e4ecf7;"></div>
<div style="left:3px;top:521px;width:32px;height:1px;background:#a6bdd7;"></div>
<div style="left:35px;top:506px;width:1px;height:16px;background:#a6bdd7;"></div>
<div class="c cc" style="left:3px;top:507px;width:32px;height:15px;line-height:16px;color:#000;"><span class="tc" style="font-size:12.5px;transform:scaleX(0.86)">18</span></div>
<div style="left:36px;top:506px;width:104px;height:15px;background:#f0f0f0;"></div>
<div style="left:36px;top:521px;width:105px;height:1px;background:#c6c6c6;"></div>
<div style="left:140px;top:506px;width:1px;height:16px;background:#c6c6c6;"></div>
<div class="c" style="left:36px;top:506px;width:104px;height:15px;line-height:16px;color:#000;"><span class="t" style="left:2px;font-size:12.5px;transform:scaleX(0.86)">ISTMENUISERIE</span></div>
<div style="left:141px;top:506px;width:104px;height:15px;background:#f0f0f0;"></div>
<div style="left:141px;top:521px;width:105px;height:1px;background:#c6c6c6;"></div>
<div style="left:245px;top:506px;width:1px;height:16px;background:#c6c6c6;"></div>
<div class="c" style="left:141px;top:506px;width:104px;height:15px;line-height:16px;color:#000;"><span class="t" style="left:2px;font-size:12.5px;transform:scaleX(0.86)">ISTQUINCAILLERIE</span></div>
<div style="left:246px;top:506px;width:40px;height:15px;background:#f0f0f0;"></div>
<div style="left:246px;top:521px;width:41px;height:1px;background:#c6c6c6;"></div>
<div style="left:286px;top:506px;width:1px;height:16px;background:#c6c6c6;"></div>
<div class="c" style="left:246px;top:506px;width:40px;height:15px;line-height:16px;color:#000;"><span class="t" style="left:2px;font-size:12.5px;transform:scaleX(0.86)">00300</span></div>
<div style="left:287px;top:506px;width:104px;height:15px;background:#f0f0f0;"></div>
<div style="left:287px;top:521px;width:105px;height:1px;background:#c6c6c6;"></div>
<div style="left:391px;top:506px;width:1px;height:16px;background:#c6c6c6;"></div>
<div class="c" style="left:287px;top:506px;width:104px;height:15px;line-height:16px;color:#000;"><span class="t" style="left:2px;font-size:12.5px;transform:scaleX(0.86)">ISTQUINCAILLERIE</span></div>
<div style="left:392px;top:506px;width:88px;height:15px;background:#f0f0f0;"></div>
<div style="left:392px;top:521px;width:89px;height:1px;background:#c6c6c6;"></div>
<div style="left:480px;top:506px;width:1px;height:16px;background:#c6c6c6;"></div>
<div class="c" style="left:392px;top:506px;width:88px;height:15px;line-height:16px;color:#000;"><span class="t" style="left:2px;font-size:12.5px;transform:scaleX(0.86)">E<i>_</i>D1<i>_</i>Z1<i>_</i>V1</span></div>
<div style="left:481px;top:506px;width:88px;height:15px;background:#f0f0f0;"></div>
<div style="left:481px;top:521px;width:89px;height:1px;background:#c6c6c6;"></div>
<div style="left:569px;top:506px;width:1px;height:16px;background:#c6c6c6;"></div>
<div style="left:570px;top:506px;width:88px;height:15px;background:#f0f0f0;"></div>
<div style="left:570px;top:521px;width:89px;height:1px;background:#c6c6c6;"></div>
<div style="left:658px;top:506px;width:1px;height:16px;background:#c6c6c6;"></div>
<div class="c" style="left:570px;top:506px;width:88px;height:15px;line-height:16px;color:#000;"><span class="t" style="left:2px;font-size:12.5px;transform:scaleX(0.86)">IS<i>_</i>Nomenclature</span></div>
<div style="left:659px;top:506px;width:72px;height:15px;background:#f0f0f0;"></div>
<div style="left:659px;top:521px;width:73px;height:1px;background:#c6c6c6;"></div>
<div style="left:731px;top:506px;width:1px;height:16px;background:#c6c6c6;"></div>
<div class="c" style="left:659px;top:506px;width:72px;height:15px;line-height:16px;color:#000;"><span class="t" style="left:2px;font-size:12.5px;transform:scaleX(0.86)">3</span></div>
<div style="left:732px;top:506px;width:328px;height:15px;background:#f0f0f0;"></div>
<div style="left:732px;top:521px;width:329px;height:1px;background:#c6c6c6;"></div>
<div style="left:1060px;top:506px;width:1px;height:16px;background:#c6c6c6;"></div>
<div class="c" style="left:732px;top:506px;width:328px;height:15px;line-height:16px;color:#000;"><span class="t" style="left:2px;font-size:12.5px;transform:scaleX(0.86)">Le VAD de dernier niveau ISTQUINCAILLERIE n&#x27;est pas destiné a</span></div>
<div style="left:1061px;top:506px;width:88px;height:15px;background:#c8ffff;"></div>
<div style="left:1061px;top:521px;width:89px;height:1px;background:#c6c6c6;"></div>
<div style="left:1149px;top:506px;width:1px;height:16px;background:#c6c6c6;"></div>
<div class="c" style="left:1061px;top:506px;width:88px;height:15px;line-height:16px;color:#000;"><span class="t" style="left:2px;font-size:12.5px;transform:scaleX(0.86)">A-TRAITER</span></div>
<div style="left:1150px;top:506px;width:96px;height:15px;background:#c8ffff;"></div>
<div style="left:1150px;top:521px;width:97px;height:1px;background:#c6c6c6;"></div>
<div style="left:1246px;top:506px;width:1px;height:16px;background:#c6c6c6;"></div>
<div class="c" style="left:1150px;top:506px;width:96px;height:15px;line-height:16px;color:#000;"><span class="t" style="left:2px;font-size:12.5px;transform:scaleX(0.86)">Non assigné</span></div>
<div style="left:3px;top:522px;width:32px;height:15px;background:#e4ecf7;"></div>
<div style="left:3px;top:537px;width:32px;height:1px;background:#a6bdd7;"></div>
<div style="left:35px;top:522px;width:1px;height:16px;background:#a6bdd7;"></div>
<div class="c cc" style="left:3px;top:523px;width:32px;height:15px;line-height:16px;color:#000;"><span class="tc" style="font-size:12.5px;transform:scaleX(0.86)">19</span></div>
<div style="left:36px;top:522px;width:104px;height:15px;background:#ffffff;"></div>
<div style="left:36px;top:537px;width:105px;height:1px;background:#c6c6c6;"></div>
<div style="left:140px;top:522px;width:1px;height:16px;background:#c6c6c6;"></div>
<div class="c" style="left:36px;top:522px;width:104px;height:15px;line-height:16px;color:#000;"><span class="t" style="left:2px;font-size:12.5px;transform:scaleX(0.86)">ISTMENUISERIE</span></div>
<div style="left:141px;top:522px;width:104px;height:15px;background:#ffffff;"></div>
<div style="left:141px;top:537px;width:105px;height:1px;background:#c6c6c6;"></div>
<div style="left:245px;top:522px;width:1px;height:16px;background:#c6c6c6;"></div>
<div class="c" style="left:141px;top:522px;width:104px;height:15px;line-height:16px;color:#000;"><span class="t" style="left:2px;font-size:12.5px;transform:scaleX(0.86)">ISTMONOUVD</span></div>
<div style="left:246px;top:522px;width:40px;height:15px;background:#ffffff;"></div>
<div style="left:246px;top:537px;width:41px;height:1px;background:#c6c6c6;"></div>
<div style="left:286px;top:522px;width:1px;height:16px;background:#c6c6c6;"></div>
<div class="c" style="left:246px;top:522px;width:40px;height:15px;line-height:16px;color:#000;"><span class="t" style="left:2px;font-size:12.5px;transform:scaleX(0.86)">00100</span></div>
<div style="left:287px;top:522px;width:104px;height:15px;background:#ffffff;"></div>
<div style="left:287px;top:537px;width:105px;height:1px;background:#c6c6c6;"></div>
<div style="left:391px;top:522px;width:1px;height:16px;background:#c6c6c6;"></div>
<div class="c" style="left:287px;top:522px;width:104px;height:15px;line-height:16px;color:#000;"><span class="t" style="left:2px;font-size:12.5px;transform:scaleX(0.86)">17A0117<i>_</i>1000<i>_</i>100</span></div>
<div style="left:392px;top:522px;width:88px;height:15px;background:#ffffff;"></div>
<div style="left:392px;top:537px;width:89px;height:1px;background:#c6c6c6;"></div>
<div style="left:480px;top:522px;width:1px;height:16px;background:#c6c6c6;"></div>
<div class="c" style="left:392px;top:522px;width:88px;height:15px;line-height:16px;color:#000;"><span class="t" style="left:2px;font-size:12.5px;transform:scaleX(0.86)">E<i>_</i>D1<i>_</i>Z1<i>_</i>V1</span></div>
<div style="left:481px;top:522px;width:88px;height:15px;background:#ffffff;"></div>
<div style="left:481px;top:537px;width:89px;height:1px;background:#c6c6c6;"></div>
<div style="left:569px;top:522px;width:1px;height:16px;background:#c6c6c6;"></div>
<div style="left:570px;top:522px;width:88px;height:15px;background:#ffffff;"></div>
<div style="left:570px;top:537px;width:89px;height:1px;background:#c6c6c6;"></div>
<div style="left:658px;top:522px;width:1px;height:16px;background:#c6c6c6;"></div>
<div class="c" style="left:570px;top:522px;width:88px;height:15px;line-height:16px;color:#000;"><span class="t" style="left:2px;font-size:12.5px;transform:scaleX(0.86)">IS<i>_</i>Nomenclature</span></div>
<div style="left:659px;top:522px;width:72px;height:15px;background:#ffffff;"></div>
<div style="left:659px;top:537px;width:73px;height:1px;background:#c6c6c6;"></div>
<div style="left:731px;top:522px;width:1px;height:16px;background:#c6c6c6;"></div>
<div class="c" style="left:659px;top:522px;width:72px;height:15px;line-height:16px;color:#000;"><span class="t" style="left:2px;font-size:12.5px;transform:scaleX(0.86)">3</span></div>
<div style="left:732px;top:522px;width:328px;height:15px;background:#ffffff;"></div>
<div style="left:732px;top:537px;width:329px;height:1px;background:#c6c6c6;"></div>
<div style="left:1060px;top:522px;width:1px;height:16px;background:#c6c6c6;"></div>
<div class="c" style="left:732px;top:522px;width:328px;height:15px;line-height:16px;color:#000;"><span class="t" style="left:2px;font-size:12.5px;transform:scaleX(0.86)">Conversion unité de mesure non trouvée : mm/BARRE</span></div>
<div style="left:1061px;top:522px;width:88px;height:15px;background:#c8ffff;"></div>
<div style="left:1061px;top:537px;width:89px;height:1px;background:#c6c6c6;"></div>
<div style="left:1149px;top:522px;width:1px;height:16px;background:#c6c6c6;"></div>
<div class="c" style="left:1061px;top:522px;width:88px;height:15px;line-height:16px;color:#000;"><span class="t" style="left:2px;font-size:12.5px;transform:scaleX(0.86)">A-TRAITER</span></div>
<div style="left:1150px;top:522px;width:96px;height:15px;background:#c8ffff;"></div>
<div style="left:1150px;top:537px;width:97px;height:1px;background:#c6c6c6;"></div>
<div style="left:1246px;top:522px;width:1px;height:16px;background:#c6c6c6;"></div>
<div class="c" style="left:1150px;top:522px;width:96px;height:15px;line-height:16px;color:#000;"><span class="t" style="left:2px;font-size:12.5px;transform:scaleX(0.86)">Non assigné</span></div>
<div style="left:3px;top:538px;width:32px;height:15px;background:#e4ecf7;"></div>
<div style="left:3px;top:553px;width:32px;height:1px;background:#a6bdd7;"></div>
<div style="left:35px;top:538px;width:1px;height:16px;background:#a6bdd7;"></div>
<div class="c cc" style="left:3px;top:539px;width:32px;height:15px;line-height:16px;color:#000;"><span class="tc" style="font-size:12.5px;transform:scaleX(0.86)">20</span></div>
<div style="left:36px;top:538px;width:104px;height:15px;background:#f0f0f0;"></div>
<div style="left:36px;top:553px;width:105px;height:1px;background:#c6c6c6;"></div>
<div style="left:140px;top:538px;width:1px;height:16px;background:#c6c6c6;"></div>
<div class="c" style="left:36px;top:538px;width:104px;height:15px;line-height:16px;color:#000;"><span class="t" style="left:2px;font-size:12.5px;transform:scaleX(0.86)">ISTMENUISERIE</span></div>
<div style="left:141px;top:538px;width:104px;height:15px;background:#f0f0f0;"></div>
<div style="left:141px;top:553px;width:105px;height:1px;background:#c6c6c6;"></div>
<div style="left:245px;top:538px;width:1px;height:16px;background:#c6c6c6;"></div>
<div class="c" style="left:141px;top:538px;width:104px;height:15px;line-height:16px;color:#000;"><span class="t" style="left:2px;font-size:12.5px;transform:scaleX(0.86)">ISTMONOUVG</span></div>
<div style="left:246px;top:538px;width:40px;height:15px;background:#f0f0f0;"></div>
<div style="left:246px;top:553px;width:41px;height:1px;background:#c6c6c6;"></div>
<div style="left:286px;top:538px;width:1px;height:16px;background:#c6c6c6;"></div>
<div class="c" style="left:246px;top:538px;width:40px;height:15px;line-height:16px;color:#000;"><span class="t" style="left:2px;font-size:12.5px;transform:scaleX(0.86)">00100</span></div>
<div style="left:287px;top:538px;width:104px;height:15px;background:#f0f0f0;"></div>
<div style="left:287px;top:553px;width:105px;height:1px;background:#c6c6c6;"></div>
<div style="left:391px;top:538px;width:1px;height:16px;background:#c6c6c6;"></div>
<div class="c" style="left:287px;top:538px;width:104px;height:15px;line-height:16px;color:#000;"><span class="t" style="left:2px;font-size:12.5px;transform:scaleX(0.86)">17A0110<i>_</i>1000<i>_</i>100</span></div>
<div style="left:392px;top:538px;width:88px;height:15px;background:#f0f0f0;"></div>
<div style="left:392px;top:553px;width:89px;height:1px;background:#c6c6c6;"></div>
<div style="left:480px;top:538px;width:1px;height:16px;background:#c6c6c6;"></div>
<div class="c" style="left:392px;top:538px;width:88px;height:15px;line-height:16px;color:#000;"><span class="t" style="left:2px;font-size:12.5px;transform:scaleX(0.86)">E<i>_</i>D1<i>_</i>Z1<i>_</i>V1</span></div>
<div style="left:481px;top:538px;width:88px;height:15px;background:#f0f0f0;"></div>
<div style="left:481px;top:553px;width:89px;height:1px;background:#c6c6c6;"></div>
<div style="left:569px;top:538px;width:1px;height:16px;background:#c6c6c6;"></div>
<div style="left:570px;top:538px;width:88px;height:15px;background:#f0f0f0;"></div>
<div style="left:570px;top:553px;width:89px;height:1px;background:#c6c6c6;"></div>
<div style="left:658px;top:538px;width:1px;height:16px;background:#c6c6c6;"></div>
<div class="c" style="left:570px;top:538px;width:88px;height:15px;line-height:16px;color:#000;"><span class="t" style="left:2px;font-size:12.5px;transform:scaleX(0.86)">IS<i>_</i>Nomenclature</span></div>
<div style="left:659px;top:538px;width:72px;height:15px;background:#f0f0f0;"></div>
<div style="left:659px;top:553px;width:73px;height:1px;background:#c6c6c6;"></div>
<div style="left:731px;top:538px;width:1px;height:16px;background:#c6c6c6;"></div>
<div class="c" style="left:659px;top:538px;width:72px;height:15px;line-height:16px;color:#000;"><span class="t" style="left:2px;font-size:12.5px;transform:scaleX(0.86)">3</span></div>
<div style="left:732px;top:538px;width:328px;height:15px;background:#f0f0f0;"></div>
<div style="left:732px;top:553px;width:329px;height:1px;background:#c6c6c6;"></div>
<div style="left:1060px;top:538px;width:1px;height:16px;background:#c6c6c6;"></div>
<div class="c" style="left:732px;top:538px;width:328px;height:15px;line-height:16px;color:#000;"><span class="t" style="left:2px;font-size:12.5px;transform:scaleX(0.86)">Conversion unité de mesure non trouvée : mm/BARRE</span></div>
<div style="left:1061px;top:538px;width:88px;height:15px;background:#c8ffff;"></div>
<div style="left:1061px;top:553px;width:89px;height:1px;background:#c6c6c6;"></div>
<div style="left:1149px;top:538px;width:1px;height:16px;background:#c6c6c6;"></div>
<div class="c" style="left:1061px;top:538px;width:88px;height:15px;line-height:16px;color:#000;"><span class="t" style="left:2px;font-size:12.5px;transform:scaleX(0.86)">A-TRAITER</span></div>
<div style="left:1150px;top:538px;width:96px;height:15px;background:#c8ffff;"></div>
<div style="left:1150px;top:553px;width:97px;height:1px;background:#c6c6c6;"></div>
<div style="left:1246px;top:538px;width:1px;height:16px;background:#c6c6c6;"></div>
<div class="c" style="left:1150px;top:538px;width:96px;height:15px;line-height:16px;color:#000;"><span class="t" style="left:2px;font-size:12.5px;transform:scaleX(0.86)">Non assigné</span></div>
<div style="left:3px;top:554px;width:32px;height:15px;background:#e4ecf7;"></div>
<div style="left:3px;top:569px;width:32px;height:1px;background:#a6bdd7;"></div>
<div style="left:35px;top:554px;width:1px;height:16px;background:#a6bdd7;"></div>
<div class="c cc" style="left:3px;top:555px;width:32px;height:15px;line-height:16px;color:#000;"><span class="tc" style="font-size:12.5px;transform:scaleX(0.86)">21</span></div>
<div style="left:36px;top:554px;width:104px;height:15px;background:#ffffff;"></div>
<div style="left:36px;top:569px;width:105px;height:1px;background:#c6c6c6;"></div>
<div style="left:140px;top:554px;width:1px;height:16px;background:#c6c6c6;"></div>
<div class="c" style="left:36px;top:554px;width:104px;height:15px;line-height:16px;color:#000;"><span class="t" style="left:2px;font-size:12.5px;transform:scaleX(0.86)">ISTMENUISERIE</span></div>
<div style="left:141px;top:554px;width:104px;height:15px;background:#ffffff;"></div>
<div style="left:141px;top:569px;width:105px;height:1px;background:#c6c6c6;"></div>
<div style="left:245px;top:554px;width:1px;height:16px;background:#c6c6c6;"></div>
<div class="c" style="left:141px;top:554px;width:104px;height:15px;line-height:16px;color:#000;"><span class="t" style="left:2px;font-size:12.5px;transform:scaleX(0.86)">ISTTRAVOUVB</span></div>
<div style="left:246px;top:554px;width:40px;height:15px;background:#ffffff;"></div>
<div style="left:246px;top:569px;width:41px;height:1px;background:#c6c6c6;"></div>
<div style="left:286px;top:554px;width:1px;height:16px;background:#c6c6c6;"></div>
<div class="c" style="left:246px;top:554px;width:40px;height:15px;line-height:16px;color:#000;"><span class="t" style="left:2px;font-size:12.5px;transform:scaleX(0.86)">00100</span></div>
<div style="left:287px;top:554px;width:104px;height:15px;background:#ffffff;"></div>
<div style="left:287px;top:569px;width:105px;height:1px;background:#c6c6c6;"></div>
<div style="left:391px;top:554px;width:1px;height:16px;background:#c6c6c6;"></div>
<div class="c" style="left:287px;top:554px;width:104px;height:15px;line-height:16px;color:#000;"><span class="t" style="left:2px;font-size:12.5px;transform:scaleX(0.86)">17A0110<i>_</i>1000<i>_</i>100</span></div>
<div style="left:392px;top:554px;width:88px;height:15px;background:#ffffff;"></div>
<div style="left:392px;top:569px;width:89px;height:1px;background:#c6c6c6;"></div>
<div style="left:480px;top:554px;width:1px;height:16px;background:#c6c6c6;"></div>
<div class="c" style="left:392px;top:554px;width:88px;height:15px;line-height:16px;color:#000;"><span class="t" style="left:2px;font-size:12.5px;transform:scaleX(0.86)">E<i>_</i>D1<i>_</i>Z1<i>_</i>V1</span></div>
<div style="left:481px;top:554px;width:88px;height:15px;background:#ffffff;"></div>
<div style="left:481px;top:569px;width:89px;height:1px;background:#c6c6c6;"></div>
<div style="left:569px;top:554px;width:1px;height:16px;background:#c6c6c6;"></div>
<div style="left:570px;top:554px;width:88px;height:15px;background:#ffffff;"></div>
<div style="left:570px;top:569px;width:89px;height:1px;background:#c6c6c6;"></div>
<div style="left:658px;top:554px;width:1px;height:16px;background:#c6c6c6;"></div>
<div class="c" style="left:570px;top:554px;width:88px;height:15px;line-height:16px;color:#000;"><span class="t" style="left:2px;font-size:12.5px;transform:scaleX(0.86)">IS<i>_</i>Nomenclature</span></div>
<div style="left:659px;top:554px;width:72px;height:15px;background:#ffffff;"></div>
<div style="left:659px;top:569px;width:73px;height:1px;background:#c6c6c6;"></div>
<div style="left:731px;top:554px;width:1px;height:16px;background:#c6c6c6;"></div>
<div class="c" style="left:659px;top:554px;width:72px;height:15px;line-height:16px;color:#000;"><span class="t" style="left:2px;font-size:12.5px;transform:scaleX(0.86)">3</span></div>
<div style="left:732px;top:554px;width:328px;height:15px;background:#ffffff;"></div>
<div style="left:732px;top:569px;width:329px;height:1px;background:#c6c6c6;"></div>
<div style="left:1060px;top:554px;width:1px;height:16px;background:#c6c6c6;"></div>
<div class="c" style="left:732px;top:554px;width:328px;height:15px;line-height:16px;color:#000;"><span class="t" style="left:2px;font-size:12.5px;transform:scaleX(0.86)">Conversion unité de mesure non trouvée : mm/BARRE</span></div>
<div style="left:1061px;top:554px;width:88px;height:15px;background:#c8ffff;"></div>
<div style="left:1061px;top:569px;width:89px;height:1px;background:#c6c6c6;"></div>
<div style="left:1149px;top:554px;width:1px;height:16px;background:#c6c6c6;"></div>
<div class="c" style="left:1061px;top:554px;width:88px;height:15px;line-height:16px;color:#000;"><span class="t" style="left:2px;font-size:12.5px;transform:scaleX(0.86)">A-TRAITER</span></div>
<div style="left:1150px;top:554px;width:96px;height:15px;background:#c8ffff;"></div>
<div style="left:1150px;top:569px;width:97px;height:1px;background:#c6c6c6;"></div>
<div style="left:1246px;top:554px;width:1px;height:16px;background:#c6c6c6;"></div>
<div class="c" style="left:1150px;top:554px;width:96px;height:15px;line-height:16px;color:#000;"><span class="t" style="left:2px;font-size:12.5px;transform:scaleX(0.86)">Non assigné</span></div>
<div style="left:3px;top:570px;width:32px;height:15px;background:#e4ecf7;"></div>
<div style="left:3px;top:585px;width:32px;height:1px;background:#a6bdd7;"></div>
<div style="left:35px;top:570px;width:1px;height:16px;background:#a6bdd7;"></div>
<div class="c cc" style="left:3px;top:571px;width:32px;height:15px;line-height:16px;color:#000;"><span class="tc" style="font-size:12.5px;transform:scaleX(0.86)">22</span></div>
<div style="left:36px;top:570px;width:104px;height:15px;background:#f0f0f0;"></div>
<div style="left:36px;top:585px;width:105px;height:1px;background:#c6c6c6;"></div>
<div style="left:140px;top:570px;width:1px;height:16px;background:#c6c6c6;"></div>
<div class="c" style="left:36px;top:570px;width:104px;height:15px;line-height:16px;color:#000;"><span class="t" style="left:2px;font-size:12.5px;transform:scaleX(0.86)">ISTMENUISERIE</span></div>
<div style="left:141px;top:570px;width:104px;height:15px;background:#f0f0f0;"></div>
<div style="left:141px;top:585px;width:105px;height:1px;background:#c6c6c6;"></div>
<div style="left:245px;top:570px;width:1px;height:16px;background:#c6c6c6;"></div>
<div class="c" style="left:141px;top:570px;width:104px;height:15px;line-height:16px;color:#000;"><span class="t" style="left:2px;font-size:12.5px;transform:scaleX(0.86)">ISTTRAVOUVH</span></div>
<div style="left:246px;top:570px;width:40px;height:15px;background:#f0f0f0;"></div>
<div style="left:246px;top:585px;width:41px;height:1px;background:#c6c6c6;"></div>
<div style="left:286px;top:570px;width:1px;height:16px;background:#c6c6c6;"></div>
<div class="c" style="left:246px;top:570px;width:40px;height:15px;line-height:16px;color:#000;"><span class="t" style="left:2px;font-size:12.5px;transform:scaleX(0.86)">00100</span></div>
<div style="left:287px;top:570px;width:104px;height:15px;background:#f0f0f0;"></div>
<div style="left:287px;top:585px;width:105px;height:1px;background:#c6c6c6;"></div>
<div style="left:391px;top:570px;width:1px;height:16px;background:#c6c6c6;"></div>
<div class="c" style="left:287px;top:570px;width:104px;height:15px;line-height:16px;color:#000;"><span class="t" style="left:2px;font-size:12.5px;transform:scaleX(0.86)">17A0110<i>_</i>1000<i>_</i>100</span></div>
<div style="left:392px;top:570px;width:88px;height:15px;background:#f0f0f0;"></div>
<div style="left:392px;top:585px;width:89px;height:1px;background:#c6c6c6;"></div>
<div style="left:480px;top:570px;width:1px;height:16px;background:#c6c6c6;"></div>
<div class="c" style="left:392px;top:570px;width:88px;height:15px;line-height:16px;color:#000;"><span class="t" style="left:2px;font-size:12.5px;transform:scaleX(0.86)">E<i>_</i>D1<i>_</i>Z1<i>_</i>V1</span></div>
<div style="left:481px;top:570px;width:88px;height:15px;background:#f0f0f0;"></div>
<div style="left:481px;top:585px;width:89px;height:1px;background:#c6c6c6;"></div>
<div style="left:569px;top:570px;width:1px;height:16px;background:#c6c6c6;"></div>
<div style="left:570px;top:570px;width:88px;height:15px;background:#f0f0f0;"></div>
<div style="left:570px;top:585px;width:89px;height:1px;background:#c6c6c6;"></div>
<div style="left:658px;top:570px;width:1px;height:16px;background:#c6c6c6;"></div>
<div class="c" style="left:570px;top:570px;width:88px;height:15px;line-height:16px;color:#000;"><span class="t" style="left:2px;font-size:12.5px;transform:scaleX(0.86)">IS<i>_</i>Nomenclature</span></div>
<div style="left:659px;top:570px;width:72px;height:15px;background:#f0f0f0;"></div>
<div style="left:659px;top:585px;width:73px;height:1px;background:#c6c6c6;"></div>
<div style="left:731px;top:570px;width:1px;height:16px;background:#c6c6c6;"></div>
<div class="c" style="left:659px;top:570px;width:72px;height:15px;line-height:16px;color:#000;"><span class="t" style="left:2px;font-size:12.5px;transform:scaleX(0.86)">3</span></div>
<div style="left:732px;top:570px;width:328px;height:15px;background:#f0f0f0;"></div>
<div style="left:732px;top:585px;width:329px;height:1px;background:#c6c6c6;"></div>
<div style="left:1060px;top:570px;width:1px;height:16px;background:#c6c6c6;"></div>
<div class="c" style="left:732px;top:570px;width:328px;height:15px;line-height:16px;color:#000;"><span class="t" style="left:2px;font-size:12.5px;transform:scaleX(0.86)">Conversion unité de mesure non trouvée : mm/BARRE</span></div>
<div style="left:1061px;top:570px;width:88px;height:15px;background:#c8ffff;"></div>
<div style="left:1061px;top:585px;width:89px;height:1px;background:#c6c6c6;"></div>
<div style="left:1149px;top:570px;width:1px;height:16px;background:#c6c6c6;"></div>
<div class="c" style="left:1061px;top:570px;width:88px;height:15px;line-height:16px;color:#000;"><span class="t" style="left:2px;font-size:12.5px;transform:scaleX(0.86)">A-TRAITER</span></div>
<div style="left:1150px;top:570px;width:96px;height:15px;background:#c8ffff;"></div>
<div style="left:1150px;top:585px;width:97px;height:1px;background:#c6c6c6;"></div>
<div style="left:1246px;top:570px;width:1px;height:16px;background:#c6c6c6;"></div>
<div class="c" style="left:1150px;top:570px;width:96px;height:15px;line-height:16px;color:#000;"><span class="t" style="left:2px;font-size:12.5px;transform:scaleX(0.86)">Non assigné</span></div>
<div style="left:3px;top:586px;width:32px;height:15px;background:#e4ecf7;"></div>
<div style="left:3px;top:601px;width:32px;height:1px;background:#a6bdd7;"></div>
<div style="left:35px;top:586px;width:1px;height:16px;background:#a6bdd7;"></div>
<div class="c cc" style="left:3px;top:587px;width:32px;height:15px;line-height:16px;color:#000;"><span class="tc" style="font-size:12.5px;transform:scaleX(0.86)">23</span></div>
<div style="left:36px;top:586px;width:104px;height:15px;background:#ffffff;"></div>
<div style="left:36px;top:601px;width:105px;height:1px;background:#c6c6c6;"></div>
<div style="left:140px;top:586px;width:1px;height:16px;background:#c6c6c6;"></div>
<div class="c" style="left:36px;top:586px;width:104px;height:15px;line-height:16px;color:#000;"><span class="t" style="left:2px;font-size:12.5px;transform:scaleX(0.86)">ISTMENUISERIE</span></div>
<div style="left:141px;top:586px;width:104px;height:15px;background:#ffffff;"></div>
<div style="left:141px;top:601px;width:105px;height:1px;background:#c6c6c6;"></div>
<div style="left:245px;top:586px;width:1px;height:16px;background:#c6c6c6;"></div>
<div class="c" style="left:141px;top:586px;width:104px;height:15px;line-height:16px;color:#000;"><span class="t" style="left:2px;font-size:12.5px;transform:scaleX(0.86)">ISTMONDORD</span></div>
<div style="left:246px;top:586px;width:40px;height:15px;background:#ffffff;"></div>
<div style="left:246px;top:601px;width:41px;height:1px;background:#c6c6c6;"></div>
<div style="left:286px;top:586px;width:1px;height:16px;background:#c6c6c6;"></div>
<div class="c" style="left:246px;top:586px;width:40px;height:15px;line-height:16px;color:#000;"><span class="t" style="left:2px;font-size:12.5px;transform:scaleX(0.86)">00100</span></div>
<div style="left:287px;top:586px;width:104px;height:15px;background:#ffffff;"></div>
<div style="left:287px;top:601px;width:105px;height:1px;background:#c6c6c6;"></div>
<div style="left:391px;top:586px;width:1px;height:16px;background:#c6c6c6;"></div>
<div class="c" style="left:287px;top:586px;width:104px;height:15px;line-height:16px;color:#000;"><span class="t" style="left:2px;font-size:12.5px;transform:scaleX(0.86)">1010412<i>_</i>1000<i>_</i>100</span></div>
<div style="left:392px;top:586px;width:88px;height:15px;background:#ffffff;"></div>
<div style="left:392px;top:601px;width:89px;height:1px;background:#c6c6c6;"></div>
<div style="left:480px;top:586px;width:1px;height:16px;background:#c6c6c6;"></div>
<div class="c" style="left:392px;top:586px;width:88px;height:15px;line-height:16px;color:#000;"><span class="t" style="left:2px;font-size:12.5px;transform:scaleX(0.86)">E<i>_</i>D1</span></div>
<div style="left:481px;top:586px;width:88px;height:15px;background:#ffffff;"></div>
<div style="left:481px;top:601px;width:89px;height:1px;background:#c6c6c6;"></div>
<div style="left:569px;top:586px;width:1px;height:16px;background:#c6c6c6;"></div>
<div style="left:570px;top:586px;width:88px;height:15px;background:#ffffff;"></div>
<div style="left:570px;top:601px;width:89px;height:1px;background:#c6c6c6;"></div>
<div style="left:658px;top:586px;width:1px;height:16px;background:#c6c6c6;"></div>
<div class="c" style="left:570px;top:586px;width:88px;height:15px;line-height:16px;color:#000;"><span class="t" style="left:2px;font-size:12.5px;transform:scaleX(0.86)">IS<i>_</i>Nomenclature</span></div>
<div style="left:659px;top:586px;width:72px;height:15px;background:#ffffff;"></div>
<div style="left:659px;top:601px;width:73px;height:1px;background:#c6c6c6;"></div>
<div style="left:731px;top:586px;width:1px;height:16px;background:#c6c6c6;"></div>
<div class="c" style="left:659px;top:586px;width:72px;height:15px;line-height:16px;color:#000;"><span class="t" style="left:2px;font-size:12.5px;transform:scaleX(0.86)">3</span></div>
<div style="left:732px;top:586px;width:328px;height:15px;background:#ffffff;"></div>
<div style="left:732px;top:601px;width:329px;height:1px;background:#c6c6c6;"></div>
<div style="left:1060px;top:586px;width:1px;height:16px;background:#c6c6c6;"></div>
<div class="c" style="left:732px;top:586px;width:328px;height:15px;line-height:16px;color:#000;"><span class="t" style="left:2px;font-size:12.5px;transform:scaleX(0.86)">Conversion unité de mesure non trouvée : mm/BARRE</span></div>
<div style="left:1061px;top:586px;width:88px;height:15px;background:#c8ffff;"></div>
<div style="left:1061px;top:601px;width:89px;height:1px;background:#c6c6c6;"></div>
<div style="left:1149px;top:586px;width:1px;height:16px;background:#c6c6c6;"></div>
<div class="c" style="left:1061px;top:586px;width:88px;height:15px;line-height:16px;color:#000;"><span class="t" style="left:2px;font-size:12.5px;transform:scaleX(0.86)">A-TRAITER</span></div>
<div style="left:1150px;top:586px;width:96px;height:15px;background:#c8ffff;"></div>
<div style="left:1150px;top:601px;width:97px;height:1px;background:#c6c6c6;"></div>
<div style="left:1246px;top:586px;width:1px;height:16px;background:#c6c6c6;"></div>
<div class="c" style="left:1150px;top:586px;width:96px;height:15px;line-height:16px;color:#000;"><span class="t" style="left:2px;font-size:12.5px;transform:scaleX(0.86)">Non assigné</span></div>
<div style="left:3px;top:602px;width:32px;height:15px;background:#e4ecf7;"></div>
<div style="left:3px;top:617px;width:32px;height:1px;background:#a6bdd7;"></div>
<div style="left:35px;top:602px;width:1px;height:16px;background:#a6bdd7;"></div>
<div class="c cc" style="left:3px;top:603px;width:32px;height:15px;line-height:16px;color:#000;"><span class="tc" style="font-size:12.5px;transform:scaleX(0.86)">24</span></div>
<div style="left:36px;top:602px;width:104px;height:15px;background:#f0f0f0;"></div>
<div style="left:36px;top:617px;width:105px;height:1px;background:#c6c6c6;"></div>
<div style="left:140px;top:602px;width:1px;height:16px;background:#c6c6c6;"></div>
<div class="c" style="left:36px;top:602px;width:104px;height:15px;line-height:16px;color:#000;"><span class="t" style="left:2px;font-size:12.5px;transform:scaleX(0.86)">ISTMENUISERIE</span></div>
<div style="left:141px;top:602px;width:104px;height:15px;background:#f0f0f0;"></div>
<div style="left:141px;top:617px;width:105px;height:1px;background:#c6c6c6;"></div>
<div style="left:245px;top:602px;width:1px;height:16px;background:#c6c6c6;"></div>
<div class="c" style="left:141px;top:602px;width:104px;height:15px;line-height:16px;color:#000;"><span class="t" style="left:2px;font-size:12.5px;transform:scaleX(0.86)">ISTMONDORG</span></div>
<div style="left:246px;top:602px;width:40px;height:15px;background:#f0f0f0;"></div>
<div style="left:246px;top:617px;width:41px;height:1px;background:#c6c6c6;"></div>
<div style="left:286px;top:602px;width:1px;height:16px;background:#c6c6c6;"></div>
<div class="c" style="left:246px;top:602px;width:40px;height:15px;line-height:16px;color:#000;"><span class="t" style="left:2px;font-size:12.5px;transform:scaleX(0.86)">00100</span></div>
<div style="left:287px;top:602px;width:104px;height:15px;background:#f0f0f0;"></div>
<div style="left:287px;top:617px;width:105px;height:1px;background:#c6c6c6;"></div>
<div style="left:391px;top:602px;width:1px;height:16px;background:#c6c6c6;"></div>
<div class="c" style="left:287px;top:602px;width:104px;height:15px;line-height:16px;color:#000;"><span class="t" style="left:2px;font-size:12.5px;transform:scaleX(0.86)">1010412<i>_</i>1000<i>_</i>100</span></div>
<div style="left:392px;top:602px;width:88px;height:15px;background:#f0f0f0;"></div>
<div style="left:392px;top:617px;width:89px;height:1px;background:#c6c6c6;"></div>
<div style="left:480px;top:602px;width:1px;height:16px;background:#c6c6c6;"></div>
<div class="c" style="left:392px;top:602px;width:88px;height:15px;line-height:16px;color:#000;"><span class="t" style="left:2px;font-size:12.5px;transform:scaleX(0.86)">E<i>_</i>D1</span></div>
<div style="left:481px;top:602px;width:88px;height:15px;background:#f0f0f0;"></div>
<div style="left:481px;top:617px;width:89px;height:1px;background:#c6c6c6;"></div>
<div style="left:569px;top:602px;width:1px;height:16px;background:#c6c6c6;"></div>
<div style="left:570px;top:602px;width:88px;height:15px;background:#f0f0f0;"></div>
<div style="left:570px;top:617px;width:89px;height:1px;background:#c6c6c6;"></div>
<div style="left:658px;top:602px;width:1px;height:16px;background:#c6c6c6;"></div>
<div class="c" style="left:570px;top:602px;width:88px;height:15px;line-height:16px;color:#000;"><span class="t" style="left:2px;font-size:12.5px;transform:scaleX(0.86)">IS<i>_</i>Nomenclature</span></div>
<div style="left:659px;top:602px;width:72px;height:15px;background:#f0f0f0;"></div>
<div style="left:659px;top:617px;width:73px;height:1px;background:#c6c6c6;"></div>
<div style="left:731px;top:602px;width:1px;height:16px;background:#c6c6c6;"></div>
<div class="c" style="left:659px;top:602px;width:72px;height:15px;line-height:16px;color:#000;"><span class="t" style="left:2px;font-size:12.5px;transform:scaleX(0.86)">3</span></div>
<div style="left:732px;top:602px;width:328px;height:15px;background:#f0f0f0;"></div>
<div style="left:732px;top:617px;width:329px;height:1px;background:#c6c6c6;"></div>
<div style="left:1060px;top:602px;width:1px;height:16px;background:#c6c6c6;"></div>
<div class="c" style="left:732px;top:602px;width:328px;height:15px;line-height:16px;color:#000;"><span class="t" style="left:2px;font-size:12.5px;transform:scaleX(0.86)">Conversion unité de mesure non trouvée : mm/BARRE</span></div>
<div style="left:1061px;top:602px;width:88px;height:15px;background:#c8ffff;"></div>
<div style="left:1061px;top:617px;width:89px;height:1px;background:#c6c6c6;"></div>
<div style="left:1149px;top:602px;width:1px;height:16px;background:#c6c6c6;"></div>
<div class="c" style="left:1061px;top:602px;width:88px;height:15px;line-height:16px;color:#000;"><span class="t" style="left:2px;font-size:12.5px;transform:scaleX(0.86)">A-TRAITER</span></div>
<div style="left:1150px;top:602px;width:96px;height:15px;background:#c8ffff;"></div>
<div style="left:1150px;top:617px;width:97px;height:1px;background:#c6c6c6;"></div>
<div style="left:1246px;top:602px;width:1px;height:16px;background:#c6c6c6;"></div>
<div class="c" style="left:1150px;top:602px;width:96px;height:15px;line-height:16px;color:#000;"><span class="t" style="left:2px;font-size:12.5px;transform:scaleX(0.86)">Non assigné</span></div>
<div style="left:3px;top:618px;width:32px;height:15px;background:#e4ecf7;"></div>
<div style="left:3px;top:633px;width:32px;height:1px;background:#a6bdd7;"></div>
<div style="left:35px;top:618px;width:1px;height:16px;background:#a6bdd7;"></div>
<div class="c cc" style="left:3px;top:619px;width:32px;height:15px;line-height:16px;color:#000;"><span class="tc" style="font-size:12.5px;transform:scaleX(0.86)">25</span></div>
<div style="left:36px;top:618px;width:104px;height:15px;background:#ffffff;"></div>
<div style="left:36px;top:633px;width:105px;height:1px;background:#c6c6c6;"></div>
<div style="left:140px;top:618px;width:1px;height:16px;background:#c6c6c6;"></div>
<div class="c" style="left:36px;top:618px;width:104px;height:15px;line-height:16px;color:#000;"><span class="t" style="left:2px;font-size:12.5px;transform:scaleX(0.86)">ISTMENUISERIE</span></div>
<div style="left:141px;top:618px;width:104px;height:15px;background:#ffffff;"></div>
<div style="left:141px;top:633px;width:105px;height:1px;background:#c6c6c6;"></div>
<div style="left:245px;top:618px;width:1px;height:16px;background:#c6c6c6;"></div>
<div class="c" style="left:141px;top:618px;width:104px;height:15px;line-height:16px;color:#000;"><span class="t" style="left:2px;font-size:12.5px;transform:scaleX(0.86)">ISTTRAVDORB</span></div>
<div style="left:246px;top:618px;width:40px;height:15px;background:#ffffff;"></div>
<div style="left:246px;top:633px;width:41px;height:1px;background:#c6c6c6;"></div>
<div style="left:286px;top:618px;width:1px;height:16px;background:#c6c6c6;"></div>
<div class="c" style="left:246px;top:618px;width:40px;height:15px;line-height:16px;color:#000;"><span class="t" style="left:2px;font-size:12.5px;transform:scaleX(0.86)">00100</span></div>
<div style="left:287px;top:618px;width:104px;height:15px;background:#ffffff;"></div>
<div style="left:287px;top:633px;width:105px;height:1px;background:#c6c6c6;"></div>
<div style="left:391px;top:618px;width:1px;height:16px;background:#c6c6c6;"></div>
<div class="c" style="left:287px;top:618px;width:104px;height:15px;line-height:16px;color:#000;"><span class="t" style="left:2px;font-size:12.5px;transform:scaleX(0.86)">1010412<i>_</i>1000<i>_</i>100</span></div>
<div style="left:392px;top:618px;width:88px;height:15px;background:#ffffff;"></div>
<div style="left:392px;top:633px;width:89px;height:1px;background:#c6c6c6;"></div>
<div style="left:480px;top:618px;width:1px;height:16px;background:#c6c6c6;"></div>
<div class="c" style="left:392px;top:618px;width:88px;height:15px;line-height:16px;color:#000;"><span class="t" style="left:2px;font-size:12.5px;transform:scaleX(0.86)">E<i>_</i>D1</span></div>
<div style="left:481px;top:618px;width:88px;height:15px;background:#ffffff;"></div>
<div style="left:481px;top:633px;width:89px;height:1px;background:#c6c6c6;"></div>
<div style="left:569px;top:618px;width:1px;height:16px;background:#c6c6c6;"></div>
<div style="left:570px;top:618px;width:88px;height:15px;background:#ffffff;"></div>
<div style="left:570px;top:633px;width:89px;height:1px;background:#c6c6c6;"></div>
<div style="left:658px;top:618px;width:1px;height:16px;background:#c6c6c6;"></div>
<div class="c" style="left:570px;top:618px;width:88px;height:15px;line-height:16px;color:#000;"><span class="t" style="left:2px;font-size:12.5px;transform:scaleX(0.86)">IS<i>_</i>Nomenclature</span></div>
<div style="left:659px;top:618px;width:72px;height:15px;background:#ffffff;"></div>
<div style="left:659px;top:633px;width:73px;height:1px;background:#c6c6c6;"></div>
<div style="left:731px;top:618px;width:1px;height:16px;background:#c6c6c6;"></div>
<div class="c" style="left:659px;top:618px;width:72px;height:15px;line-height:16px;color:#000;"><span class="t" style="left:2px;font-size:12.5px;transform:scaleX(0.86)">3</span></div>
<div style="left:732px;top:618px;width:328px;height:15px;background:#ffffff;"></div>
<div style="left:732px;top:633px;width:329px;height:1px;background:#c6c6c6;"></div>
<div style="left:1060px;top:618px;width:1px;height:16px;background:#c6c6c6;"></div>
<div class="c" style="left:732px;top:618px;width:328px;height:15px;line-height:16px;color:#000;"><span class="t" style="left:2px;font-size:12.5px;transform:scaleX(0.86)">Conversion unité de mesure non trouvée : mm/BARRE</span></div>
<div style="left:1061px;top:618px;width:88px;height:15px;background:#c8ffff;"></div>
<div style="left:1061px;top:633px;width:89px;height:1px;background:#c6c6c6;"></div>
<div style="left:1149px;top:618px;width:1px;height:16px;background:#c6c6c6;"></div>
<div class="c" style="left:1061px;top:618px;width:88px;height:15px;line-height:16px;color:#000;"><span class="t" style="left:2px;font-size:12.5px;transform:scaleX(0.86)">A-TRAITER</span></div>
<div style="left:1150px;top:618px;width:96px;height:15px;background:#c8ffff;"></div>
<div style="left:1150px;top:633px;width:97px;height:1px;background:#c6c6c6;"></div>
<div style="left:1246px;top:618px;width:1px;height:16px;background:#c6c6c6;"></div>
<div class="c" style="left:1150px;top:618px;width:96px;height:15px;line-height:16px;color:#000;"><span class="t" style="left:2px;font-size:12.5px;transform:scaleX(0.86)">Non assigné</span></div>
<div style="left:3px;top:634px;width:32px;height:15px;background:#e4ecf7;"></div>
<div style="left:3px;top:649px;width:32px;height:1px;background:#a6bdd7;"></div>
<div style="left:35px;top:634px;width:1px;height:16px;background:#a6bdd7;"></div>
<div class="c cc" style="left:3px;top:635px;width:32px;height:15px;line-height:16px;color:#000;"><span class="tc" style="font-size:12.5px;transform:scaleX(0.86)">26</span></div>
<div style="left:36px;top:634px;width:104px;height:15px;background:#f0f0f0;"></div>
<div style="left:36px;top:649px;width:105px;height:1px;background:#c6c6c6;"></div>
<div style="left:140px;top:634px;width:1px;height:16px;background:#c6c6c6;"></div>
<div class="c" style="left:36px;top:634px;width:104px;height:15px;line-height:16px;color:#000;"><span class="t" style="left:2px;font-size:12.5px;transform:scaleX(0.86)">ISTMENUISERIE</span></div>
<div style="left:141px;top:634px;width:104px;height:15px;background:#f0f0f0;"></div>
<div style="left:141px;top:649px;width:105px;height:1px;background:#c6c6c6;"></div>
<div style="left:245px;top:634px;width:1px;height:16px;background:#c6c6c6;"></div>
<div class="c" style="left:141px;top:634px;width:104px;height:15px;line-height:16px;color:#000;"><span class="t" style="left:2px;font-size:12.5px;transform:scaleX(0.86)">ISTTRAVDORH</span></div>
<div style="left:246px;top:634px;width:40px;height:15px;background:#f0f0f0;"></div>
<div style="left:246px;top:649px;width:41px;height:1px;background:#c6c6c6;"></div>
<div style="left:286px;top:634px;width:1px;height:16px;background:#c6c6c6;"></div>
<div class="c" style="left:246px;top:634px;width:40px;height:15px;line-height:16px;color:#000;"><span class="t" style="left:2px;font-size:12.5px;transform:scaleX(0.86)">00100</span></div>
<div style="left:287px;top:634px;width:104px;height:15px;background:#f0f0f0;"></div>
<div style="left:287px;top:649px;width:105px;height:1px;background:#c6c6c6;"></div>
<div style="left:391px;top:634px;width:1px;height:16px;background:#c6c6c6;"></div>
<div class="c" style="left:287px;top:634px;width:104px;height:15px;line-height:16px;color:#000;"><span class="t" style="left:2px;font-size:12.5px;transform:scaleX(0.86)">1010412<i>_</i>1000<i>_</i>100</span></div>
<div style="left:392px;top:634px;width:88px;height:15px;background:#f0f0f0;"></div>
<div style="left:392px;top:649px;width:89px;height:1px;background:#c6c6c6;"></div>
<div style="left:480px;top:634px;width:1px;height:16px;background:#c6c6c6;"></div>
<div class="c" style="left:392px;top:634px;width:88px;height:15px;line-height:16px;color:#000;"><span class="t" style="left:2px;font-size:12.5px;transform:scaleX(0.86)">E<i>_</i>D1</span></div>
<div style="left:481px;top:634px;width:88px;height:15px;background:#f0f0f0;"></div>
<div style="left:481px;top:649px;width:89px;height:1px;background:#c6c6c6;"></div>
<div style="left:569px;top:634px;width:1px;height:16px;background:#c6c6c6;"></div>
<div style="left:570px;top:634px;width:88px;height:15px;background:#f0f0f0;"></div>
<div style="left:570px;top:649px;width:89px;height:1px;background:#c6c6c6;"></div>
<div style="left:658px;top:634px;width:1px;height:16px;background:#c6c6c6;"></div>
<div class="c" style="left:570px;top:634px;width:88px;height:15px;line-height:16px;color:#000;"><span class="t" style="left:2px;font-size:12.5px;transform:scaleX(0.86)">IS<i>_</i>Nomenclature</span></div>
<div style="left:659px;top:634px;width:72px;height:15px;background:#f0f0f0;"></div>
<div style="left:659px;top:649px;width:73px;height:1px;background:#c6c6c6;"></div>
<div style="left:731px;top:634px;width:1px;height:16px;background:#c6c6c6;"></div>
<div class="c" style="left:659px;top:634px;width:72px;height:15px;line-height:16px;color:#000;"><span class="t" style="left:2px;font-size:12.5px;transform:scaleX(0.86)">3</span></div>
<div style="left:732px;top:634px;width:328px;height:15px;background:#f0f0f0;"></div>
<div style="left:732px;top:649px;width:329px;height:1px;background:#c6c6c6;"></div>
<div style="left:1060px;top:634px;width:1px;height:16px;background:#c6c6c6;"></div>
<div class="c" style="left:732px;top:634px;width:328px;height:15px;line-height:16px;color:#000;"><span class="t" style="left:2px;font-size:12.5px;transform:scaleX(0.86)">Conversion unité de mesure non trouvée : mm/BARRE</span></div>
<div style="left:1061px;top:634px;width:88px;height:15px;background:#c8ffff;"></div>
<div style="left:1061px;top:649px;width:89px;height:1px;background:#c6c6c6;"></div>
<div style="left:1149px;top:634px;width:1px;height:16px;background:#c6c6c6;"></div>
<div class="c" style="left:1061px;top:634px;width:88px;height:15px;line-height:16px;color:#000;"><span class="t" style="left:2px;font-size:12.5px;transform:scaleX(0.86)">A-TRAITER</span></div>
<div style="left:1150px;top:634px;width:96px;height:15px;background:#c8ffff;"></div>
<div style="left:1150px;top:649px;width:97px;height:1px;background:#c6c6c6;"></div>
<div style="left:1246px;top:634px;width:1px;height:16px;background:#c6c6c6;"></div>
<div class="c" style="left:1150px;top:634px;width:96px;height:15px;line-height:16px;color:#000;"><span class="t" style="left:2px;font-size:12.5px;transform:scaleX(0.86)">Non assigné</span></div>
<div style="left:34px;top:234px;width:108px;height:17px;border-top:1px solid #000;border-left:3px solid #0a3c8a;border-right:3px solid #1c1c1c;border-bottom:3px solid #1c1c1c;"></div>
</body></html>
